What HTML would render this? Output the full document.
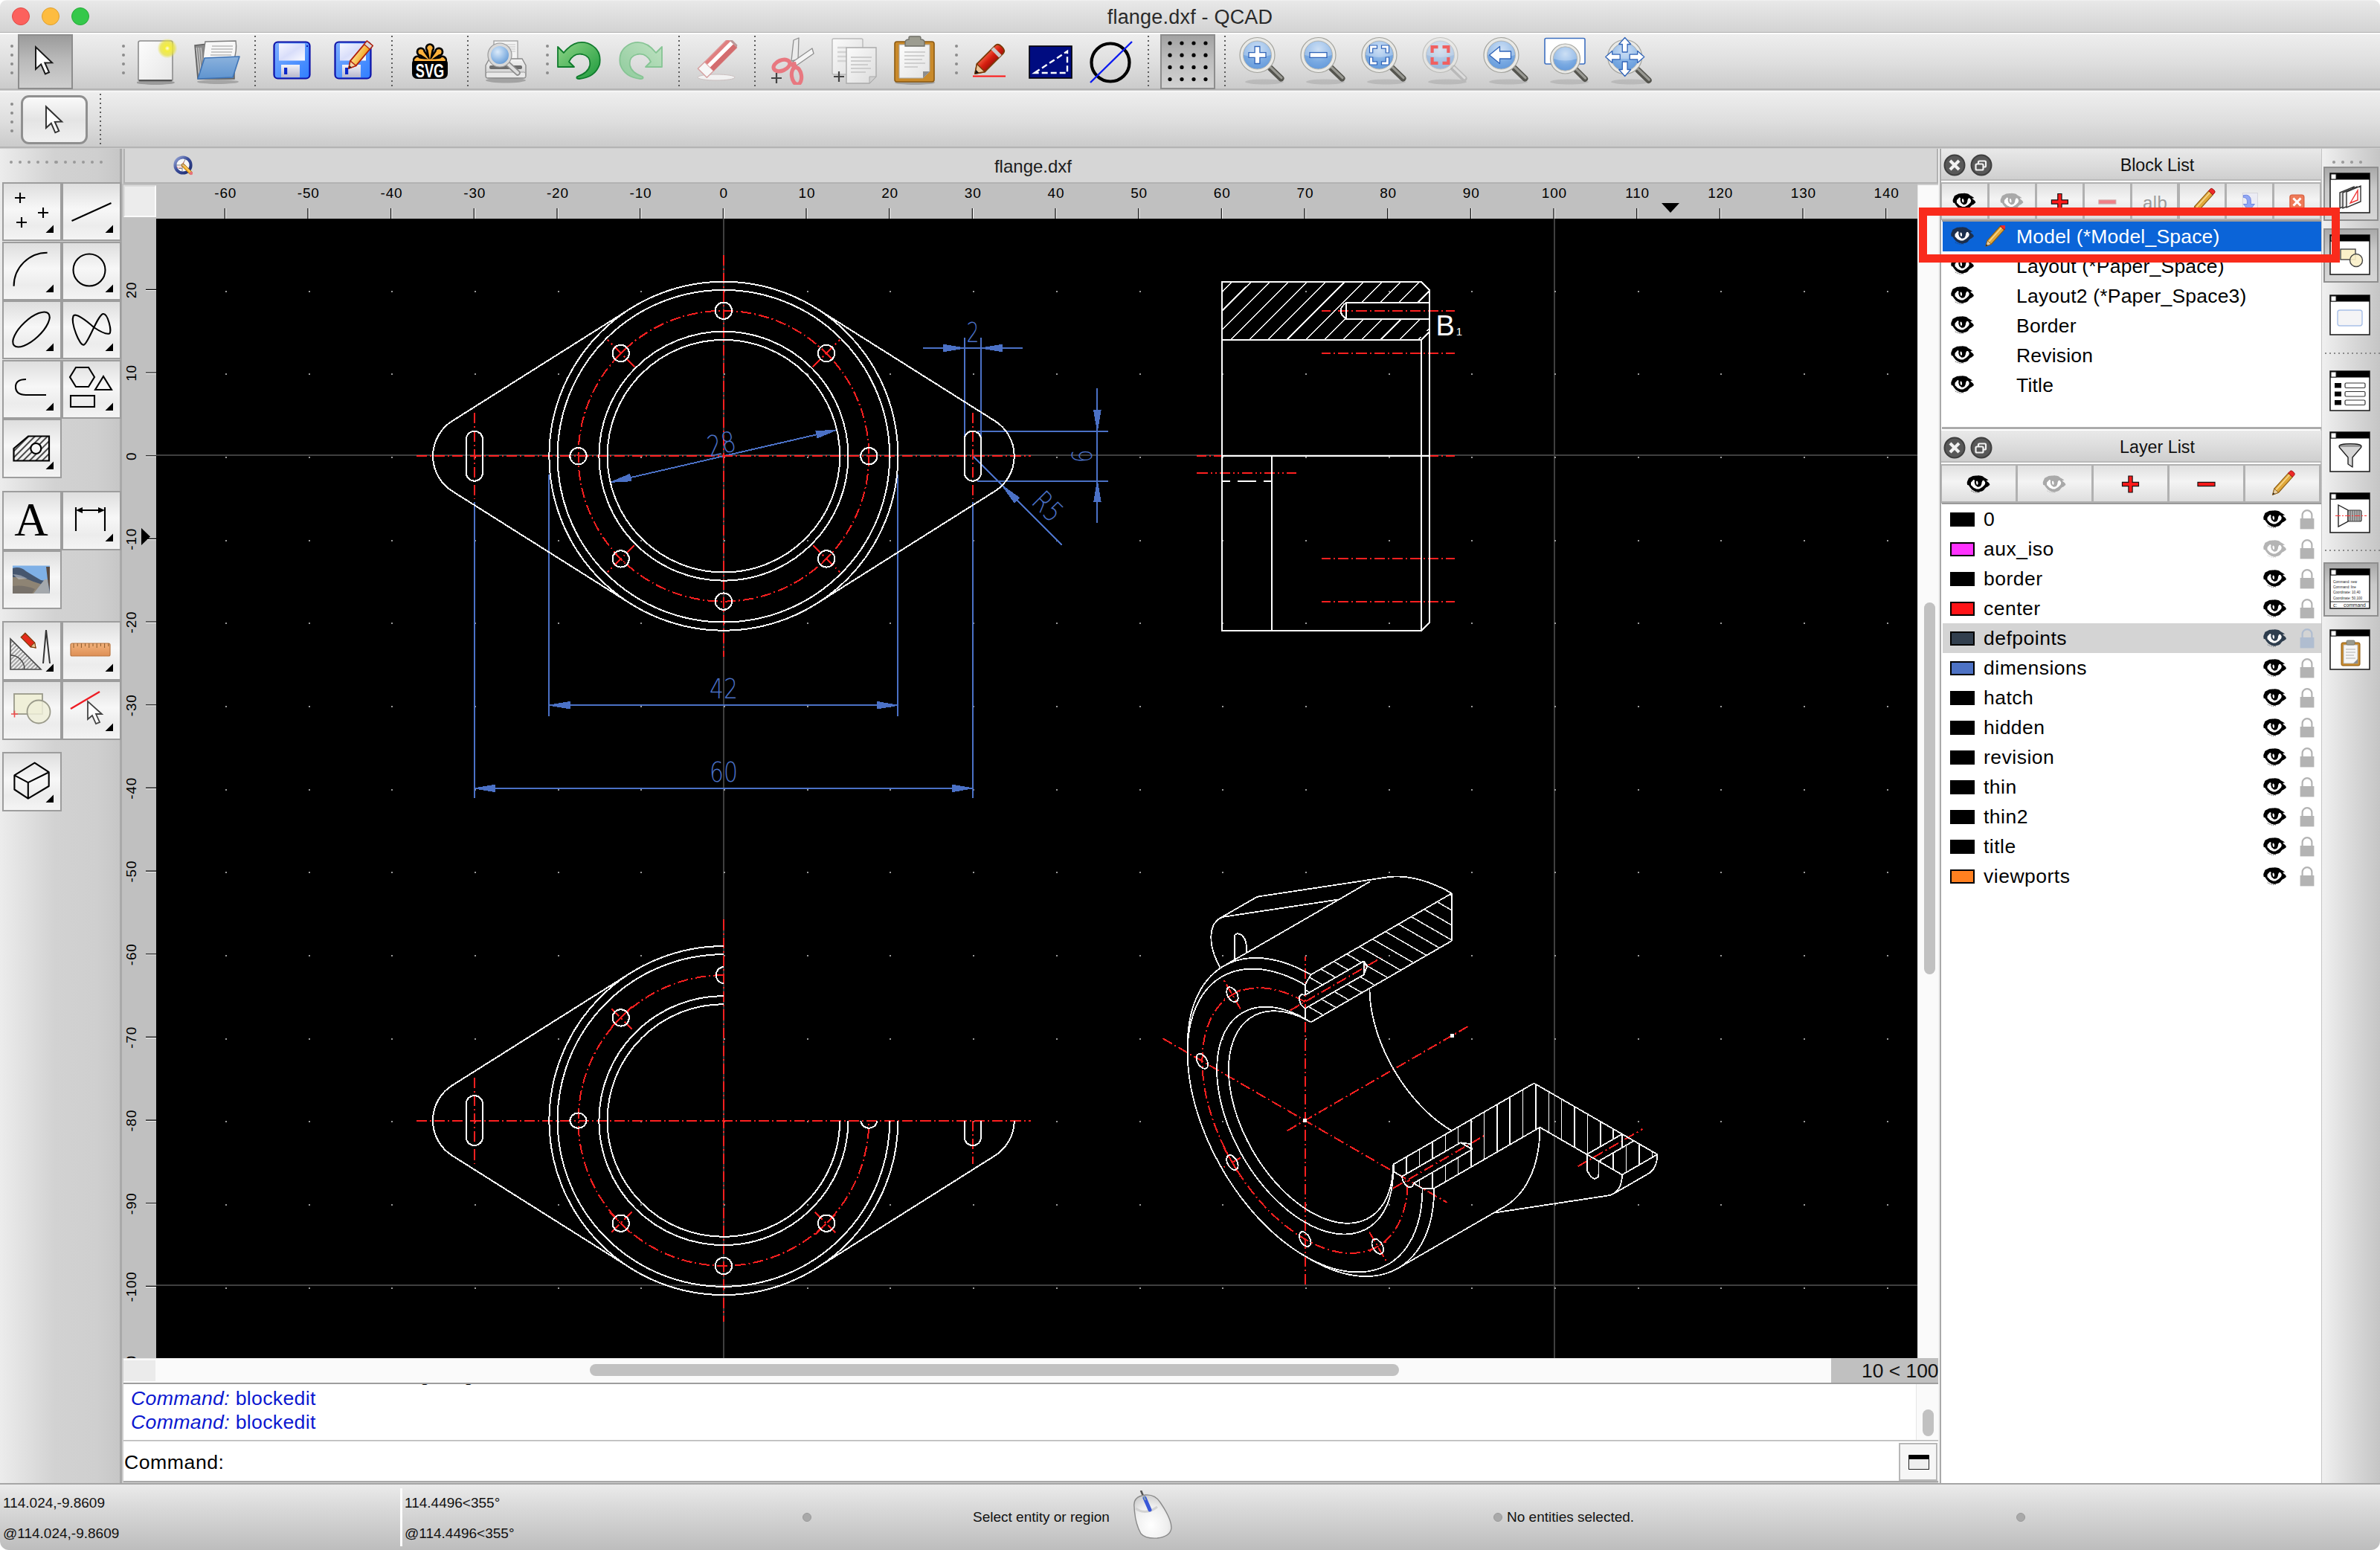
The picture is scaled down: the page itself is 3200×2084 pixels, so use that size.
<!DOCTYPE html>
<html lang="en"><head><meta charset="utf-8"><title>flange.dxf - QCAD</title>
<style>

*{box-sizing:border-box;margin:0;padding:0}
html{background:#fff}
html,body{width:3200px;height:2084px;overflow:hidden}
body{background:#fff}
body{position:relative;font-family:"Liberation Sans","DejaVu Sans",sans-serif;color:#111;font-size:26px}
.abs{position:absolute}
#titlebar{left:0;top:0;width:3200px;height:44px;background:linear-gradient(#f3f3f3,#e8e8e8 4%,#d3d3d3);border-bottom:1px solid #b0b0b0;border-radius:9px 9px 0 0}
#title{left:0;top:0;width:3200px;height:44px;line-height:46px;text-align:center;font-size:27px;color:#2a2a2a;letter-spacing:.2px}
.tl{width:24px;height:24px;border-radius:50%;top:10px}
#tb1{left:0;top:44px;width:3200px;height:77px;background:linear-gradient(#fff 0,#fff 2px,#eeeeee 2px,#dedede 55%,#cbcbcb);border-bottom:2px solid #b4b4b4}
#tb2{left:0;top:122px;width:3200px;height:77px;background:linear-gradient(#f6f6f6 0,#f6f6f6 2px,#eeeeee 2px,#dedede 55%,#cbcbcb);border-bottom:2px solid #b4b4b4}
#leftpanel{left:0;top:200px;width:163px;height:1794px;background:linear-gradient(90deg,#ececec,#d2d2d2 45%,#cfcfcf 80%,#c6c6c6)}
#leftpanel .edge{left:161px;top:0;width:3px;height:1794px;background:#a9a9a9}
#tabbar{left:166px;top:200px;width:2440px;height:47px;background:#d6d6d6;border-bottom:2px solid #b2b2b2;border-left:2px solid #b2b2b2;border-right:2px solid #b2b2b2}
#tabtitle{left:166px;top:200px;width:2440px;height:46px;line-height:47px;text-align:center;font-size:24px;color:#1c1c1c;padding-left:6px}
#hruler{left:164px;top:247px;width:2414px;height:47px;background:#c0c0c0}
#vruler{left:164px;top:294px;width:46px;height:1532px;background:#c0c0c0}
#rcorner{left:166px;top:249px;width:44px;height:43px;background:#ececec;border:2px solid #fbfbfb;border-top-color:#dcdcdc;border-left-color:#dcdcdc}
#canvas{left:210px;top:294px;width:2368px;height:1532px;background:#000;overflow:hidden}
#vscroll{left:2578px;top:249px;width:28px;height:1577px;background:#fafafa;border-left:1px solid #e6e6e6}
#vthumb{left:2586.5px;top:809.5px;width:15.5px;height:500px;border-radius:8px;background:#c1c1c1}
#hscroll{left:166px;top:1826px;width:2412px;height:33px;background:#fafafa;border-top:1px solid #e8e8e8}
#hthumb{left:793px;top:1834px;width:1088px;height:16px;border-radius:8px;background:#c1c1c1}
#hcorner{left:166px;top:1829px;width:43px;height:28px;background:#ebebeb}
#zoomlbl{left:2462px;top:1826px;width:146.5px;height:33px;background:#c0c0c0;font-size:26.4px;line-height:35px;text-align:right;padding-right:2px;color:#111}
#cmdhist{left:166px;top:1859px;width:2440px;height:78px;background:#fff;border-top:2px solid #9e9e9e;border-bottom:1px solid #bdbdbd;overflow:hidden}
#cmdline{left:166px;top:1938px;width:2440px;height:55px;background:#fff;border-bottom:2px solid #a8a8a8}
#status{left:0;top:1994px;width:3200px;height:90px;background:linear-gradient(#ebebeb,#d9d9d9 35%,#bdbdbd);border-top:2px solid #a6a6a6;border-radius:0 0 12px 12px}
.st{font-size:19px;color:#111;white-space:nowrap;line-height:22px}
#rpanel{left:2608px;top:200px;width:514px;height:1794px;background:#fff}
#rtool{left:3122px;top:200px;width:78px;height:1794px;background:linear-gradient(90deg,#f0f0f0,#dcdcdc 45%,#c5c5c5)}
.dockhdr{left:2610px;width:511px;height:43px;background:linear-gradient(#e9e9e9,#dadada 60%,#cfcfcf);border-bottom:2px solid #b9b9b9;font-size:23.3px;text-align:center;line-height:44px;color:#111;padding-left:70px}
.btnrow{left:2610px;width:511px;background:#b1b1b1}
.btn{position:absolute;top:2px;background:linear-gradient(#e0e0e0,#f4f4f4 45%,#dedede);}
.row{position:absolute;left:0;width:509px;height:40px;line-height:40px;font-size:26.5px;letter-spacing:.2px;white-space:nowrap;color:#000}
.lrow{letter-spacing:.5px}
.sw{position:absolute;left:10px;top:11px;width:33px;height:19px;border:2px solid #000}
.tbtn{position:absolute;background:linear-gradient(#dedede,#f7f7f7 45%,#ececec 75%,#f4f4f4);border:2.5px solid #9d9d9d}

</style></head>
<body>
<div class="abs" style="left:0;top:40px;width:3200px;height:1960px;background:#cdcdcd"></div>
<div id="titlebar" class="abs"></div>
<div id="title" class="abs">flange.dxf - QCAD</div>
<i class="abs tl" style="left:16px;background:#fc615d;border:1px solid #de4b47"></i>
<i class="abs tl" style="left:56px;background:#fdbc40;border:1px solid #dda031"></i>
<i class="abs tl" style="left:96px;background:#34c84a;border:1px solid #27a93a"></i>
<div id="tb1" class="abs"></div>
<i class="abs" style="left:13.8px;top:59.8px;width:4.4px;height:4.4px;border-radius:50%;background:#8c8c8c"></i><i class="abs" style="left:13.8px;top:71.8px;width:4.4px;height:4.4px;border-radius:50%;background:#8c8c8c"></i><i class="abs" style="left:13.8px;top:83.8px;width:4.4px;height:4.4px;border-radius:50%;background:#8c8c8c"></i><i class="abs" style="left:13.8px;top:95.8px;width:4.4px;height:4.4px;border-radius:50%;background:#8c8c8c"></i>
<div class="abs" style="left:24px;top:46px;width:74px;height:74px;background:linear-gradient(#9b9b9b,#b9b9b9 45%,#cfcfcf);border:2px solid #8d8d8d"></div>
<div class="abs" style="left:46px;top:61px;line-height:0"><svg width="27" height="41" viewBox="0 0 20 30" ><path d="M1.5 1.5 L1.5 23.5 L6.8 18.6 L11.0 28.3 L14.8 26.6 L10.6 17.2 L17.8 17.0 Z" fill="#fff" stroke="#1a1a1a" stroke-width="1.48" stroke-linejoin="miter"/></svg></div>
<i class="abs" style="left:163.8px;top:59.8px;width:4.4px;height:4.4px;border-radius:50%;background:#8c8c8c"></i><i class="abs" style="left:163.8px;top:71.8px;width:4.4px;height:4.4px;border-radius:50%;background:#8c8c8c"></i><i class="abs" style="left:163.8px;top:83.8px;width:4.4px;height:4.4px;border-radius:50%;background:#8c8c8c"></i><i class="abs" style="left:163.8px;top:95.8px;width:4.4px;height:4.4px;border-radius:50%;background:#8c8c8c"></i>
<div class="abs" style="left:184px;top:52px;line-height:0"><svg width="60" height="64" viewBox="0 0 60 64" ><defs><radialGradient id="g1"><stop offset="0" stop-color="#fffdf0"/><stop offset=".25" stop-color="#f4ee3c"/><stop offset=".7" stop-color="#e8e23a" stop-opacity=".75"/><stop offset="1" stop-color="#e6e040" stop-opacity="0"/></radialGradient>
<linearGradient id="g1p" x1="0" y1="0" x2="1" y2="1"><stop offset="0" stop-color="#fdfdfd"/><stop offset="1" stop-color="#e6e6e6"/></linearGradient></defs>
<ellipse cx="25" cy="59" rx="26" ry="3" fill="#000" opacity=".25"/>
<rect x="2" y="3" width="46" height="54" rx="2.5" fill="url(#g1p)" stroke="#8c8c8c" stroke-width="1.6"/>
<rect x="3" y="55" width="44" height="2.2" fill="#555"/>
<circle cx="41" cy="13" r="13.5" fill="url(#g1)"/></svg></div>
<div class="abs" style="left:259px;top:52px;line-height:0"><svg width="68" height="64" viewBox="0 0 68 64" ><defs><linearGradient id="g2" x1="0" y1="0" x2="0" y2="1"><stop offset="0" stop-color="#8bb2dd"/><stop offset="1" stop-color="#5f94cf"/></linearGradient></defs>
<ellipse cx="34" cy="58" rx="28" ry="3" fill="#000" opacity=".2"/>
<path d="M3 9 L20 7 L24 11 L56 11 L56 54 L7 54 Z" fill="#8a8a8a" stroke="#5e5e5e" stroke-width="1.5"/>
<path d="M5 12 L9 50 M8 12 L12 50 M11 12 L15 50" stroke="#d0d0d0" stroke-width="1.2"/>
<path d="M17 4 L58 3 Q60 16 55 30 L50 52 L10 52 Q14 30 15 18 Z" fill="#f7f7f7" stroke="#7d7d7d" stroke-width="1.4"/>
<path d="M26 10 H54 M25 14 H54 M25 18 H53 M24 22 H52 M24 26 H50" stroke="#b9b9b9" stroke-width="1.6"/>
<path d="M16 26 L63 24 L54 52 L7 54 Z" fill="url(#g2)" stroke="#3f74b6" stroke-width="1.6" stroke-linejoin="round"/></svg></div>
<i class="abs" style="left:342px;top:48px;width:2px;height:70px;background:repeating-linear-gradient(180deg,#5c5c5c 0,#5c5c5c 2px,transparent 2px,transparent 6px)"></i>
<div class="abs" style="left:367px;top:55px;line-height:0"><svg width="52" height="54" viewBox="0 0 52 54" ><defs><linearGradient id="g3" x1="0" y1="0" x2="1" y2="1"><stop offset="0" stop-color="#7fb0ff"/><stop offset="1" stop-color="#2f7dff"/></linearGradient>
<linearGradient id="g3w" x1="0" y1="0" x2="1" y2="1"><stop offset="0" stop-color="#f6f7ff"/><stop offset=".5" stop-color="#d9defa"/><stop offset="1" stop-color="#fbfbff"/></linearGradient>
<linearGradient id="g3s" x1="0" y1="0" x2="0" y2="1"><stop offset="0" stop-color="#f2f2f8"/><stop offset="1" stop-color="#b7b7cc"/></linearGradient>
<linearGradient id="g3y" x1="0" y1="0" x2="1" y2="1"><stop offset="0" stop-color="#ffe89a"/><stop offset="1" stop-color="#f09a10"/></linearGradient></defs><rect x="1.5" y="1.5" width="48" height="49" rx="5" fill="url(#g3)" stroke="#0d12a8" stroke-width="2.2"/>
<rect x="8" y="3.5" width="35" height="23" fill="url(#g3w)"/>
<rect x="11" y="32" width="25" height="17" fill="url(#g3s)"/>
<rect x="15" y="36" width="4.2" height="9" fill="#0c28c8"/>
<rect x="45" y="6" width="2" height="2" fill="#0d12a8"/></svg></div>
<div class="abs" style="left:449px;top:51px;line-height:0"><svg width="60" height="60" viewBox="0 0 60 60" ><defs><linearGradient id="g4" x1="0" y1="0" x2="1" y2="1"><stop offset="0" stop-color="#7fb0ff"/><stop offset="1" stop-color="#2f7dff"/></linearGradient>
<linearGradient id="g4w" x1="0" y1="0" x2="1" y2="1"><stop offset="0" stop-color="#f6f7ff"/><stop offset=".5" stop-color="#d9defa"/><stop offset="1" stop-color="#fbfbff"/></linearGradient>
<linearGradient id="g4s" x1="0" y1="0" x2="0" y2="1"><stop offset="0" stop-color="#f2f2f8"/><stop offset="1" stop-color="#b7b7cc"/></linearGradient>
<linearGradient id="g4y" x1="0" y1="0" x2="1" y2="1"><stop offset="0" stop-color="#ffe89a"/><stop offset="1" stop-color="#f09a10"/></linearGradient></defs><g transform="translate(0,4)"><rect x="1.5" y="1.5" width="48" height="49" rx="5" fill="url(#g4)" stroke="#0d12a8" stroke-width="2.2"/>
<rect x="8" y="3.5" width="35" height="23" fill="url(#g4w)"/>
<rect x="11" y="32" width="25" height="17" fill="url(#g4s)"/>
<rect x="15" y="36" width="4.2" height="9" fill="#0c28c8"/>
<rect x="45" y="6" width="2" height="2" fill="#0d12a8"/></g><g transform="translate(20,41) rotate(-50)"><path d="M0 0 L9 -5 L44 -5 L44 5 L9 5 Z" fill="url(#g4y)" stroke="#b0210e" stroke-width="1.8" stroke-linejoin="round"/>
<path d="M0 0 L9 -5 L9 5 Z" fill="#f3d6a8" stroke="#b0210e" stroke-width="1.4"/><path d="M0 0 L3.5 -2 L3.5 2 Z" fill="#222"/>
<rect x="38" y="-5" width="6" height="10" fill="#d7d7d7" stroke="#b0210e" stroke-width="1.2"/></g></svg></div>
<i class="abs" style="left:526px;top:48px;width:2px;height:70px;background:repeating-linear-gradient(180deg,#5c5c5c 0,#5c5c5c 2px,transparent 2px,transparent 6px)"></i>
<div class="abs" style="left:554px;top:58px;line-height:0"><svg width="48" height="48" viewBox="0 0 48 48" ><path transform="translate(24,23.4) rotate(0)" d="M0 -1 L-2.5 -14.4 A3.5 3.5 0 1 1 2.5 -14.4 Z" fill="#000" stroke="#000" stroke-width="5.6" stroke-linejoin="round"/><path transform="translate(24,23.4) rotate(-46)" d="M0 -1 L-2.5 -14.4 A3.5 3.5 0 1 1 2.5 -14.4 Z" fill="#000" stroke="#000" stroke-width="5.6" stroke-linejoin="round"/><path transform="translate(24,23.4) rotate(46)" d="M0 -1 L-2.5 -14.4 A3.5 3.5 0 1 1 2.5 -14.4 Z" fill="#000" stroke="#000" stroke-width="5.6" stroke-linejoin="round"/><path transform="translate(24,23.4) rotate(-88)" d="M0 -1 L-2.5 -14.4 A3.5 3.5 0 1 1 2.5 -14.4 Z" fill="#000" stroke="#000" stroke-width="5.6" stroke-linejoin="round"/><path transform="translate(24,23.4) rotate(88)" d="M0 -1 L-2.5 -14.4 A3.5 3.5 0 1 1 2.5 -14.4 Z" fill="#000" stroke="#000" stroke-width="5.6" stroke-linejoin="round"/><rect x="0" y="20.5" width="48" height="27.5" rx="7" fill="#000"/><path transform="translate(24,23.4) rotate(0)" d="M0 -1 L-2.5 -14.4 A3.5 3.5 0 1 1 2.5 -14.4 Z" fill="#ffb13b"/><path transform="translate(24,23.4) rotate(-46)" d="M0 -1 L-2.5 -14.4 A3.5 3.5 0 1 1 2.5 -14.4 Z" fill="#ffb13b"/><path transform="translate(24,23.4) rotate(46)" d="M0 -1 L-2.5 -14.4 A3.5 3.5 0 1 1 2.5 -14.4 Z" fill="#ffb13b"/><path transform="translate(24,23.4) rotate(-88)" d="M0 -1 L-2.5 -14.4 A3.5 3.5 0 1 1 2.5 -14.4 Z" fill="#ffb13b"/><path transform="translate(24,23.4) rotate(88)" d="M0 -1 L-2.5 -14.4 A3.5 3.5 0 1 1 2.5 -14.4 Z" fill="#ffb13b"/><path d="M3.4 21.6 H44.6 V24 H3.4 Z" fill="#ffb13b"/><rect x="1" y="24" width="46" height="3" fill="#000"/><text x="24" y="45.6" font-family="Liberation Sans, DejaVu Sans, sans-serif" font-weight="bold" font-size="26" text-anchor="middle" fill="#fff" textLength="38.5" lengthAdjust="spacingAndGlyphs">SVG</text></svg></div>
<i class="abs" style="left:628px;top:48px;width:2px;height:70px;background:repeating-linear-gradient(180deg,#5c5c5c 0,#5c5c5c 2px,transparent 2px,transparent 6px)"></i>
<div class="abs" style="left:650px;top:52px;line-height:0"><svg width="60" height="62" viewBox="0 0 60 62" ><defs><radialGradient id="g5" cx=".4" cy=".35" r=".7"><stop offset="0" stop-color="#dcebfa"/><stop offset=".6" stop-color="#8db7e4"/><stop offset="1" stop-color="#5b92cf"/></radialGradient>
<linearGradient id="g5b" x1="0" y1="0" x2="0" y2="1"><stop offset="0" stop-color="#f4f4f4"/><stop offset="1" stop-color="#c9c9c9"/></linearGradient></defs>
<ellipse cx="30" cy="56" rx="27" ry="3.5" fill="#000" opacity=".22"/>
<rect x="14" y="3" width="32" height="26" fill="#f3f3f3" stroke="#9f9f9f" stroke-width="1.3"/>
<path d="M30 8 H43 M30 11 H43 M30 14 H43 M30 17 H43" stroke="#c4c4c4" stroke-width="1.2"/>
<path d="M8 27 H52 L57 36 V50 Q57 53 54 53 H6 Q3 53 3 50 V36 Z" fill="url(#g5b)" stroke="#8b8b8b" stroke-width="1.4"/>
<rect x="8" y="36" width="44" height="5" rx="2" fill="#6d6d6d"/><rect x="3.5" y="45" width="53" height="7.5" rx="2" fill="#e9e9e9" stroke="#9a9a9a" stroke-width="1"/>
<path d="M33 34 L46 46" stroke="#8c8c8c" stroke-width="7.5" stroke-linecap="round"/><path d="M33 34 L46 46" stroke="#dedede" stroke-width="4" stroke-linecap="round"/>
<circle cx="22" cy="22" r="14" fill="url(#g5)" stroke="#d9d9d9" stroke-width="4"/><circle cx="22" cy="22" r="16" fill="none" stroke="#9a9a9a" stroke-width="1.2"/></svg></div>
<i class="abs" style="left:733.8px;top:59.8px;width:4.4px;height:4.4px;border-radius:50%;background:#8c8c8c"></i><i class="abs" style="left:733.8px;top:71.8px;width:4.4px;height:4.4px;border-radius:50%;background:#8c8c8c"></i><i class="abs" style="left:733.8px;top:83.8px;width:4.4px;height:4.4px;border-radius:50%;background:#8c8c8c"></i><i class="abs" style="left:733.8px;top:95.8px;width:4.4px;height:4.4px;border-radius:50%;background:#8c8c8c"></i>
<div class="abs" style="left:748px;top:54px;line-height:0"><svg width="62" height="56" viewBox="0 0 62 56" ><defs><linearGradient id="g6" x1="0" y1="0" x2="1" y2="1"><stop offset="0" stop-color="#8fd587"/><stop offset="1" stop-color="#1d9a3c"/></linearGradient></defs>
<path d="M2 9 L2 36 L24 36 L17 29 Q23 17 35 19 Q47 22 45 34 Q43 44 28 49 Q26 52 31 52 Q52 50 58 33 Q62 12 42 4 Q24 -1 10 17 Z" fill="url(#g6)" stroke="#0f7a2c" stroke-width="1.8" stroke-linejoin="round"/></svg></div>
<div class="abs" style="left:830px;top:54px;line-height:0"><svg width="62" height="56" viewBox="0 0 62 56" ><g transform="translate(62,0) scale(-1,1)"><defs><linearGradient id="g7" x1="0" y1="0" x2="1" y2="1"><stop offset="0" stop-color="#bfe2c2"/><stop offset="1" stop-color="#8fcb9c"/></linearGradient></defs>
<path d="M2 9 L2 36 L24 36 L17 29 Q23 17 35 19 Q47 22 45 34 Q43 44 28 49 Q26 52 31 52 Q52 50 58 33 Q62 12 42 4 Q24 -1 10 17 Z" fill="url(#g7)" stroke="#86c494" stroke-width="1.8" stroke-linejoin="round"/></g></svg></div>
<i class="abs" style="left:912px;top:48px;width:2px;height:70px;background:repeating-linear-gradient(180deg,#5c5c5c 0,#5c5c5c 2px,transparent 2px,transparent 6px)"></i>
<div class="abs" style="left:936px;top:54px;line-height:0"><svg width="58" height="58" viewBox="0 0 58 58" ><ellipse cx="27" cy="50" rx="25" ry="4" fill="#fff" opacity=".7" stroke="#c8b8b8" stroke-width="1"/>
<g transform="translate(8,44) rotate(-45)"><rect x="0" y="-8" width="13" height="17" fill="#f7f7f7" stroke="#d6a0a0" stroke-width="1.4"/>
<rect x="13" y="-8" width="44" height="17" fill="#e07f80" stroke="#d99" stroke-width="1.2"/><rect x="13" y="-3" width="44" height="5.5" fill="#fff"/>
<rect x="13" y="2.5" width="44" height="6.5" fill="#d36c6e"/><path d="M57 -8 L60 -5 L60 7 L57 9 Z" fill="#b99"/></g></svg></div>
<i class="abs" style="left:1014px;top:48px;width:2px;height:70px;background:repeating-linear-gradient(180deg,#5c5c5c 0,#5c5c5c 2px,transparent 2px,transparent 6px)"></i>
<div class="abs" style="left:1034px;top:50px;line-height:0"><svg width="62" height="64" viewBox="0 0 62 64" ><path d="M30 32 L33 4 L40 1 L39 30 Z" fill="#ececec" stroke="#8f8f8f" stroke-width="1.3" stroke-linejoin="round"/>
<path d="M32 33 L58 15 L60 22 L37 38 Z" fill="#f4f4f4" stroke="#8f8f8f" stroke-width="1.3" stroke-linejoin="round"/>
<ellipse cx="17" cy="38" rx="11.5" ry="7" transform="rotate(-22 17 38)" fill="none" stroke="#e87880" stroke-width="5.2"/>
<ellipse cx="37" cy="52" rx="6.5" ry="11.5" transform="rotate(-8 37 52)" fill="none" stroke="#e87880" stroke-width="5.2"/>
<path d="M26 34 L36 33 L38 42 L31 41 Z" fill="#e87880"/>
<path d="M3 55 H17 M10 48 V62" stroke="#444" stroke-width="2.2"/></svg></div>
<div class="abs" style="left:1114px;top:50px;line-height:0"><svg width="68" height="66" viewBox="0 0 68 66" ><defs><linearGradient id="g8" x1="0" y1="0" x2="1" y2="1"><stop offset="0" stop-color="#fbfbfb"/><stop offset="1" stop-color="#dcdcdc"/></linearGradient></defs>
<rect x="5" y="2" width="41" height="48" rx="2" fill="url(#g8)" stroke="#b9b9b9" stroke-width="1.4"/>
<path d="M12 14 H24 M12 20 H24 M12 26 H24 M12 32 H24" stroke="#d4d4d4" stroke-width="2.4"/>
<path d="M24 14 H64 V53 L55 62 H24 Z" fill="url(#g8)" stroke="#ababab" stroke-width="1.4"/>
<path d="M64 53 L55 62 L55 53 Z" fill="#cfcfcf" stroke="#ababab" stroke-width="1"/>
<path d="M30 27 H58 M30 32 H57 M30 37 H53 M30 42 H57 M30 47 H50" stroke="#cdcdcd" stroke-width="2.2"/>
<path d="M7 53 H21 M14 46 V60" stroke="#444" stroke-width="2.2"/></svg></div>
<div class="abs" style="left:1200px;top:48px;line-height:0"><svg width="60" height="68" viewBox="0 0 60 68" ><defs><linearGradient id="g9" x1="0" y1="0" x2="1" y2="1"><stop offset="0" stop-color="#fdfdfd"/><stop offset="1" stop-color="#e2e2e2"/></linearGradient></defs>
<ellipse cx="30" cy="63" rx="27" ry="3" fill="#000" opacity=".22"/>
<rect x="3" y="8" width="53" height="54" rx="3" fill="#c98a2b" stroke="#8c5a12" stroke-width="1.6"/>
<path d="M9 12 H50 V48 L41 57 H9 Z" fill="url(#g9)" stroke="#a9a9a9" stroke-width="1"/>
<path d="M50 48 L41 57 L41 48 Z" fill="#8d8d8d"/>
<path d="M16 22 H44 M16 27 H43 M16 32 H40 M16 37 H44 M16 42 H34" stroke="#cfcfcf" stroke-width="2.2"/>
<path d="M17 9 Q17 5 22 5 L22 2.5 Q22 1 24 1 H36 Q38 1 38 2.5 L38 5 Q43 5 43 9 V14 H17 Z" fill="#9c9c90" stroke="#6e6e66" stroke-width="1.3"/></svg></div>
<i class="abs" style="left:1283.8px;top:59.8px;width:4.4px;height:4.4px;border-radius:50%;background:#8c8c8c"></i><i class="abs" style="left:1283.8px;top:71.8px;width:4.4px;height:4.4px;border-radius:50%;background:#8c8c8c"></i><i class="abs" style="left:1283.8px;top:83.8px;width:4.4px;height:4.4px;border-radius:50%;background:#8c8c8c"></i><i class="abs" style="left:1283.8px;top:95.8px;width:4.4px;height:4.4px;border-radius:50%;background:#8c8c8c"></i>
<div class="abs" style="left:1306px;top:56px;line-height:0"><svg width="50" height="52" viewBox="0 0 50 52" ><defs><linearGradient id="g10" x1="0" y1="0" x2="0" y2="1"><stop offset="0" stop-color="#f0553a"/><stop offset=".5" stop-color="#d61f10"/><stop offset="1" stop-color="#a5120a"/></linearGradient></defs>
<g transform="translate(5,43) rotate(-45)"><path d="M0 0 L11 -7.5 L46 -7.5 Q51 -7.5 51 0 Q51 7.5 46 7.5 L11 7.5 Z" fill="url(#g10)" stroke="#7a3a08" stroke-width="1.8" stroke-linejoin="round"/>
<path d="M0 0 L11 -7.5 L11 7.5 Z" fill="#e8c79c" stroke="#7a3a08" stroke-width="1.4"/><path d="M0 0 L4.5 -3 L4.5 3 Z" fill="#111"/>
<rect x="38" y="-7.5" width="5" height="15" fill="#c9c9c9"/></g>
<path d="M2 46.5 H46" stroke="#ff1414" stroke-width="2.2"/></svg></div>
<div class="abs" style="left:1383px;top:61px;line-height:0"><svg width="60" height="46" viewBox="0 0 60 46" ><rect x="1" y="1" width="57" height="43" fill="#000c80" stroke="#000" stroke-width="1.6"/>
<path d="M8 37 L52 8 L52 37 Z" fill="none" stroke="#fff" stroke-width="2.4" stroke-dasharray="8 4"/></svg></div>
<div class="abs" style="left:1463px;top:50px;line-height:0"><svg width="62" height="64" viewBox="0 0 62 64" ><circle cx="30" cy="34" r="25.5" fill="none" stroke="#000" stroke-width="4.2"/>
<path d="M3 61 L59 6" stroke="#0a18f0" stroke-width="2.4"/></svg></div>
<i class="abs" style="left:1543px;top:48px;width:2px;height:70px;background:repeating-linear-gradient(180deg,#5c5c5c 0,#5c5c5c 2px,transparent 2px,transparent 6px)"></i>
<div class="abs" style="left:1560px;top:46px;width:74px;height:74px;background:linear-gradient(#a2a2a2,#bdbdbd 45%,#d2d2d2);border:2px solid #8d8d8d"></div>
<div class="abs" style="left:1566px;top:52px;line-height:0"><svg width="62" height="62" viewBox="0 0 62 62" ><circle cx="7" cy="6.0" r="2.6" fill="#000"/><circle cx="7" cy="22.2" r="2.6" fill="#000"/><circle cx="7" cy="38.4" r="2.6" fill="#000"/><circle cx="7" cy="54.599999999999994" r="2.6" fill="#000"/><circle cx="23" cy="6.0" r="2.6" fill="#000"/><circle cx="23" cy="22.2" r="2.6" fill="#000"/><circle cx="23" cy="38.4" r="2.6" fill="#000"/><circle cx="23" cy="54.599999999999994" r="2.6" fill="#000"/><circle cx="39" cy="6.0" r="2.6" fill="#000"/><circle cx="39" cy="22.2" r="2.6" fill="#000"/><circle cx="39" cy="38.4" r="2.6" fill="#000"/><circle cx="39" cy="54.599999999999994" r="2.6" fill="#000"/><circle cx="55" cy="6.0" r="2.6" fill="#000"/><circle cx="55" cy="22.2" r="2.6" fill="#000"/><circle cx="55" cy="38.4" r="2.6" fill="#000"/><circle cx="55" cy="54.599999999999994" r="2.6" fill="#000"/></svg></div>
<i class="abs" style="left:1646px;top:48px;width:2px;height:70px;background:repeating-linear-gradient(180deg,#5c5c5c 0,#5c5c5c 2px,transparent 2px,transparent 6px)"></i>
<div class="abs" style="left:1664px;top:48px;line-height:0"><svg width="66" height="70" viewBox="0 0 66 70" ><defs><radialGradient id="g11" cx=".5" cy=".3" r=".8"><stop offset="0" stop-color="#b9d3f1"/><stop offset=".55" stop-color="#7aaae2"/><stop offset="1" stop-color="#5e95d8"/></radialGradient></defs><ellipse cx="36" cy="62" rx="26" ry="3.5" fill="#000" opacity=".10"/><path d="M44.0 43.5 L58.5 57.5" stroke="#55554f" stroke-width="8" stroke-linecap="round"/><path d="M44.5 42.7 L59.0 56.7" stroke="#9a9a94" stroke-width="3.2" stroke-linecap="round"/><g><circle cx="26.5" cy="26" r="23.5" fill="#e9e9e6" stroke="#a3a39d" stroke-width="1.2"/><circle cx="26.5" cy="26" r="19.0" fill="url(#g11)" stroke="#b8b8b2" stroke-width="1"/><path d="M8.2 26.0 A18.3 18.3 0 0 1 44.8 26.0 Q26.5 31.9 8.2 26.0 Z" fill="#fff" opacity=".28"/></g><path d="M23.1 14.5 h6.8 v8.1 h8.1 v6.8 h-8.1 v8.1 h-6.8 v-8.1 h-8.1 v-6.8 h8.1 Z" fill="#fff" stroke="#2f63b8" stroke-width="1.3"/></svg></div>
<div class="abs" style="left:1746px;top:48px;line-height:0"><svg width="66" height="70" viewBox="0 0 66 70" ><defs><radialGradient id="g12" cx=".5" cy=".3" r=".8"><stop offset="0" stop-color="#b9d3f1"/><stop offset=".55" stop-color="#7aaae2"/><stop offset="1" stop-color="#5e95d8"/></radialGradient></defs><ellipse cx="36" cy="62" rx="26" ry="3.5" fill="#000" opacity=".10"/><path d="M44.0 43.5 L58.5 57.5" stroke="#55554f" stroke-width="8" stroke-linecap="round"/><path d="M44.5 42.7 L59.0 56.7" stroke="#9a9a94" stroke-width="3.2" stroke-linecap="round"/><g><circle cx="26.5" cy="26" r="23.5" fill="#e9e9e6" stroke="#a3a39d" stroke-width="1.2"/><circle cx="26.5" cy="26" r="19.0" fill="url(#g12)" stroke="#b8b8b2" stroke-width="1"/><path d="M8.2 26.0 A18.3 18.3 0 0 1 44.8 26.0 Q26.5 31.9 8.2 26.0 Z" fill="#fff" opacity=".28"/></g><rect x="15.0" y="22.6" width="23" height="6.8" fill="#fff" stroke="#2f63b8" stroke-width="1.3"/></svg></div>
<div class="abs" style="left:1828px;top:48px;line-height:0"><svg width="66" height="70" viewBox="0 0 66 70" ><defs><radialGradient id="g13" cx=".5" cy=".3" r=".8"><stop offset="0" stop-color="#b9d3f1"/><stop offset=".55" stop-color="#7aaae2"/><stop offset="1" stop-color="#5e95d8"/></radialGradient></defs><ellipse cx="36" cy="62" rx="26" ry="3.5" fill="#000" opacity=".10"/><path d="M44.0 43.5 L58.5 57.5" stroke="#55554f" stroke-width="8" stroke-linecap="round"/><path d="M44.5 42.7 L59.0 56.7" stroke="#9a9a94" stroke-width="3.2" stroke-linecap="round"/><g><circle cx="26.5" cy="26" r="23.5" fill="#e9e9e6" stroke="#a3a39d" stroke-width="1.2"/><circle cx="26.5" cy="26" r="19.0" fill="url(#g13)" stroke="#b8b8b2" stroke-width="1"/><path d="M8.2 26.0 A18.3 18.3 0 0 1 44.8 26.0 Q26.5 31.9 8.2 26.0 Z" fill="#fff" opacity=".28"/></g><path d="M13.5 13 h10 v4.2 h-5.8 v5.8 h-4.2 Z" fill="#fff" stroke="#2f63b8" stroke-width="1.2"/><path d="M13.5 39 h10 v-4.2 h-5.8 v-5.8 h-4.2 Z" fill="#fff" stroke="#2f63b8" stroke-width="1.2"/><path d="M39.5 13 h-10 v4.2 h5.8 v5.8 h4.2 Z" fill="#fff" stroke="#2f63b8" stroke-width="1.2"/><path d="M39.5 39 h-10 v-4.2 h5.8 v-5.8 h4.2 Z" fill="#fff" stroke="#2f63b8" stroke-width="1.2"/></svg></div>
<div class="abs" style="left:1910px;top:48px;line-height:0"><svg width="66" height="70" viewBox="0 0 66 70" ><defs><radialGradient id="g14" cx=".5" cy=".3" r=".8"><stop offset="0" stop-color="#b9d3f1"/><stop offset=".55" stop-color="#7aaae2"/><stop offset="1" stop-color="#5e95d8"/></radialGradient></defs><ellipse cx="36" cy="62" rx="26" ry="3.5" fill="#000" opacity=".10"/><path d="M44.0 43.5 L58.5 57.5" stroke="#b9b9b9" stroke-width="8" stroke-linecap="round"/><path d="M44.5 42.7 L59.0 56.7" stroke="#dcdcdc" stroke-width="3.2" stroke-linecap="round"/><g opacity=".55"><circle cx="26.5" cy="26" r="23.5" fill="#e9e9e6" stroke="#a3a39d" stroke-width="1.2"/><circle cx="26.5" cy="26" r="19.0" fill="url(#g14)" stroke="#b8b8b2" stroke-width="1"/><path d="M8.2 26.0 A18.3 18.3 0 0 1 44.8 26.0 Q26.5 31.9 8.2 26.0 Z" fill="#fff" opacity=".28"/></g><path d="M13.5 13 h10 v4.2 h-5.8 v5.8 h-4.2 Z" fill="#f06060" stroke="none" stroke-width="1.2"/><path d="M13.5 39 h10 v-4.2 h-5.8 v-5.8 h-4.2 Z" fill="#f06060" stroke="none" stroke-width="1.2"/><path d="M39.5 13 h-10 v4.2 h5.8 v5.8 h4.2 Z" fill="#f06060" stroke="none" stroke-width="1.2"/><path d="M39.5 39 h-10 v-4.2 h5.8 v-5.8 h4.2 Z" fill="#f06060" stroke="none" stroke-width="1.2"/></svg></div>
<div class="abs" style="left:1992px;top:48px;line-height:0"><svg width="66" height="70" viewBox="0 0 66 70" ><defs><radialGradient id="g15" cx=".5" cy=".3" r=".8"><stop offset="0" stop-color="#b9d3f1"/><stop offset=".55" stop-color="#7aaae2"/><stop offset="1" stop-color="#5e95d8"/></radialGradient></defs><ellipse cx="36" cy="62" rx="26" ry="3.5" fill="#000" opacity=".10"/><path d="M44.0 43.5 L58.5 57.5" stroke="#55554f" stroke-width="8" stroke-linecap="round"/><path d="M44.5 42.7 L59.0 56.7" stroke="#9a9a94" stroke-width="3.2" stroke-linecap="round"/><g><circle cx="26.5" cy="26" r="23.5" fill="#e9e9e6" stroke="#a3a39d" stroke-width="1.2"/><circle cx="26.5" cy="26" r="19.0" fill="url(#g15)" stroke="#b8b8b2" stroke-width="1"/><path d="M8.2 26.0 A18.3 18.3 0 0 1 44.8 26.0 Q26.5 31.9 8.2 26.0 Z" fill="#fff" opacity=".28"/></g><path d="M10.5 26 l14 -11.5 v6.5 h15 v10 h-15 v6.5 Z" fill="#fff" stroke="#2f63b8" stroke-width="1.3" stroke-linejoin="round"/></svg></div>
<div class="abs" style="left:2074px;top:48px;line-height:0"><svg width="66" height="70" viewBox="0 0 66 70" ><defs><radialGradient id="g16" cx=".5" cy=".3" r=".8"><stop offset="0" stop-color="#b9d3f1"/><stop offset=".55" stop-color="#7aaae2"/><stop offset="1" stop-color="#5e95d8"/></radialGradient></defs><ellipse cx="36" cy="62" rx="26" ry="3.5" fill="#000" opacity=".10"/><rect x="3" y="3.5" width="54" height="34.5" rx="2" fill="#fff" stroke="#3d6fc0" stroke-width="1.6"/><path d="M45 46 L57 58" stroke="#55554f" stroke-width="8" stroke-linecap="round"/><path d="M45.5 45.2 L57.5 57.2" stroke="#9a9a94" stroke-width="3.2" stroke-linecap="round"/><g><circle cx="30.5" cy="31" r="20" fill="#e9e9e6" stroke="#a3a39d" stroke-width="1.2"/><circle cx="30.5" cy="31" r="16.2" fill="url(#g16)" stroke="#b8b8b2" stroke-width="1"/><path d="M14.9 31.0 A15.6 15.6 0 0 1 46.1 31.0 Q30.5 36.0 14.9 31.0 Z" fill="#fff" opacity=".28"/></g></svg></div>
<div class="abs" style="left:2156px;top:48px;line-height:0"><svg width="66" height="70" viewBox="0 0 66 70" ><defs><radialGradient id="g17" cx=".5" cy=".3" r=".8"><stop offset="0" stop-color="#b9d3f1"/><stop offset=".55" stop-color="#7aaae2"/><stop offset="1" stop-color="#5e95d8"/></radialGradient></defs><ellipse cx="36" cy="62" rx="26" ry="3.5" fill="#000" opacity=".10"/><path d="M46.2 46.0 L60.7 60.0" stroke="#55554f" stroke-width="8" stroke-linecap="round"/><path d="M46.7 45.2 L61.2 59.2" stroke="#9a9a94" stroke-width="3.2" stroke-linecap="round"/><g><circle cx="28.7" cy="28.5" r="23" fill="#e9e9e6" stroke="#a3a39d" stroke-width="1.2"/><circle cx="28.7" cy="28.5" r="18.6" fill="url(#g17)" stroke="#b8b8b2" stroke-width="1"/><path d="M10.8 28.5 A17.9 17.9 0 0 1 46.6 28.5 Q28.7 34.2 10.8 28.5 Z" fill="#fff" opacity=".28"/></g><path transform="rotate(0 28.7 28.5)" d="M54.7 28.5 l-9 -8 v4.6 h-10.5 v6.8 h10.5 v4.6 Z" fill="#fff" stroke="#2f63b8" stroke-width="1.3" stroke-linejoin="round"/><path transform="rotate(90 28.7 28.5)" d="M54.7 28.5 l-9 -8 v4.6 h-10.5 v6.8 h10.5 v4.6 Z" fill="#fff" stroke="#2f63b8" stroke-width="1.3" stroke-linejoin="round"/><path transform="rotate(180 28.7 28.5)" d="M54.7 28.5 l-9 -8 v4.6 h-10.5 v6.8 h10.5 v4.6 Z" fill="#fff" stroke="#2f63b8" stroke-width="1.3" stroke-linejoin="round"/><path transform="rotate(270 28.7 28.5)" d="M54.7 28.5 l-9 -8 v4.6 h-10.5 v6.8 h10.5 v4.6 Z" fill="#fff" stroke="#2f63b8" stroke-width="1.3" stroke-linejoin="round"/></svg></div>
<div id="tb2" class="abs"></div>
<i class="abs" style="left:13.8px;top:137.8px;width:4.4px;height:4.4px;border-radius:50%;background:#8c8c8c"></i><i class="abs" style="left:13.8px;top:149.8px;width:4.4px;height:4.4px;border-radius:50%;background:#8c8c8c"></i><i class="abs" style="left:13.8px;top:161.8px;width:4.4px;height:4.4px;border-radius:50%;background:#8c8c8c"></i><i class="abs" style="left:13.8px;top:173.8px;width:4.4px;height:4.4px;border-radius:50%;background:#8c8c8c"></i>
<div class="abs" style="left:28px;top:128px;width:90px;height:66px;border:3px solid #8f8f8f;border-radius:11px;background:linear-gradient(#fafafa,#e4e4e4 50%,#f0f0f0)"></div>
<div class="abs" style="left:60px;top:141px;line-height:0"><svg width="26" height="40" viewBox="0 0 20 30" ><path d="M1.5 1.5 L1.5 23.5 L6.8 18.6 L11.0 28.3 L14.8 26.6 L10.6 17.2 L17.8 17.0 Z" fill="#fff" stroke="#333" stroke-width="1.54" stroke-linejoin="miter"/></svg></div>
<i class="abs" style="left:134px;top:126px;width:2px;height:68px;background:repeating-linear-gradient(180deg,#5c5c5c 0,#5c5c5c 2px,transparent 2px,transparent 6px)"></i>
<div id="leftpanel" class="abs"><i class="abs edge"></i></div>
<i class="abs" style="left:12.9px;top:215.9px;width:4.2px;height:4.2px;border-radius:50%;background:#9a9a9a"></i><i class="abs" style="left:25.0px;top:215.9px;width:4.2px;height:4.2px;border-radius:50%;background:#9a9a9a"></i><i class="abs" style="left:37.1px;top:215.9px;width:4.2px;height:4.2px;border-radius:50%;background:#9a9a9a"></i><i class="abs" style="left:49.199999999999996px;top:215.9px;width:4.2px;height:4.2px;border-radius:50%;background:#9a9a9a"></i><i class="abs" style="left:61.3px;top:215.9px;width:4.2px;height:4.2px;border-radius:50%;background:#9a9a9a"></i><i class="abs" style="left:73.4px;top:215.9px;width:4.2px;height:4.2px;border-radius:50%;background:#9a9a9a"></i><i class="abs" style="left:85.5px;top:215.9px;width:4.2px;height:4.2px;border-radius:50%;background:#9a9a9a"></i><i class="abs" style="left:97.60000000000001px;top:215.9px;width:4.2px;height:4.2px;border-radius:50%;background:#9a9a9a"></i><i class="abs" style="left:109.7px;top:215.9px;width:4.2px;height:4.2px;border-radius:50%;background:#9a9a9a"></i><i class="abs" style="left:121.8px;top:215.9px;width:4.2px;height:4.2px;border-radius:50%;background:#9a9a9a"></i><i class="abs" style="left:133.9px;top:215.9px;width:4.2px;height:4.2px;border-radius:50%;background:#9a9a9a"></i>
<div class="tbtn" style="left:3px;top:244.5px;width:79.5px;height:79.5px"><svg width="74" height="74" viewBox="0 0 74 74" ><path d="M15 19 H29 M22 12 V26" fill="none" stroke="#000" stroke-width="2.1"/><path d="M46 39 H60 M53 32 V46" fill="none" stroke="#000" stroke-width="2.1"/><path d="M17 52 H31 M24 45 V59" fill="none" stroke="#000" stroke-width="2.1"/><path d="M67 55.5 V66 H56.5 Z" fill="#000"/></svg></div>
<div class="tbtn" style="left:83px;top:244.5px;width:79.5px;height:79.5px"><svg width="74" height="74" viewBox="0 0 74 74" ><path d="M11.5 50 L64.5 26" fill="none" stroke="#000" stroke-width="2.1"/><path d="M67 55.5 V66 H56.5 Z" fill="#000"/></svg></div>
<div class="tbtn" style="left:3px;top:324.5px;width:79.5px;height:79.5px"><svg width="74" height="74" viewBox="0 0 74 74" ><path d="M13.6 57.7 A45 45 0 0 1 58.6 12.7" fill="none" stroke="#000" stroke-width="2.1"/><path d="M67 55.5 V66 H56.5 Z" fill="#000"/></svg></div>
<div class="tbtn" style="left:83px;top:324.5px;width:79.5px;height:79.5px"><svg width="74" height="74" viewBox="0 0 74 74" ><circle cx="35" cy="36" r="21.5" fill="none" stroke="#000" stroke-width="2.1"/><path d="M67 55.5 V66 H56.5 Z" fill="#000"/></svg></div>
<div class="tbtn" style="left:3px;top:403.5px;width:79.5px;height:79.5px"><svg width="74" height="74" viewBox="0 0 74 74" ><ellipse cx="37" cy="37" rx="31.5" ry="13" transform="rotate(-43 37 37)" fill="none" stroke="#000" stroke-width="2.1"/><path d="M67 55.5 V66 H56.5 Z" fill="#000"/></svg></div>
<div class="tbtn" style="left:83px;top:403.5px;width:79.5px;height:79.5px"><svg width="74" height="74" viewBox="0 0 74 74" ><path d="M41 34 C30 24 16 14 13.5 19 C10 28 22 60 28 57.5 C34 55 46 18 53.5 16 C60 15 66 40 62 42.5 C58 44 50 40 41 34 Z" fill="none" stroke="#000" stroke-width="2.1" stroke-linejoin="round"/><path d="M67 55.5 V66 H56.5 Z" fill="#000"/></svg></div>
<div class="tbtn" style="left:3px;top:483.5px;width:79.5px;height:79.5px"><svg width="74" height="74" viewBox="0 0 74 74" ><path d="M30 24 Q16 24 16 34 Q16 45 30 45 H57" fill="none" stroke="#000" stroke-width="2.1"/><path d="M67 55.5 V66 H56.5 Z" fill="#000"/></svg></div>
<div class="tbtn" style="left:83px;top:483.5px;width:79.5px;height:79.5px"><svg width="74" height="74" viewBox="0 0 74 74" ><path d="M17 8 H34 L42 21 L34 34 H17 L9 21 Z" fill="none" stroke="#000" stroke-width="2.1" stroke-width="2"/><path d="M54 20 L65 38 H43 Z" fill="none" stroke="#000" stroke-width="2.1" stroke-width="2"/><rect x="10" y="46" width="32" height="15" fill="none" stroke="#000" stroke-width="2.1" stroke-width="2"/><path d="M67 55.5 V66 H56.5 Z" fill="#000"/></svg></div>
<div class="tbtn" style="left:3px;top:563.0px;width:79.5px;height:79.5px"><svg width="74" height="74" viewBox="0 0 74 74" ><defs><pattern id="h18" width="6" height="6" patternUnits="userSpaceOnUse" patternTransform="rotate(-45)"><path d="M0 3 H6" stroke="#000" stroke-width="1.4"/></pattern></defs><path d="M13.5 38 L33 21.5 H61 V54.5 H13.5 Z M50.3 38 a7 7 0 1 0 -14 0 a7 7 0 1 0 14 0 Z" fill="url(#h18)" fill-rule="evenodd" stroke="#000" stroke-width="2.2"/><path d="M67 55.5 V66 H56.5 Z" fill="#000"/></svg></div>
<div class="tbtn" style="left:3px;top:660.0px;width:79.5px;height:79.5px"><svg width="74" height="74" viewBox="0 0 74 74" ><text x="37" y="58" font-family="Liberation Serif, DejaVu Serif, serif" font-size="63" text-anchor="middle" fill="#000">A</text></svg></div>
<div class="tbtn" style="left:83px;top:660.0px;width:79.5px;height:79.5px"><svg width="74" height="74" viewBox="0 0 74 74" ><path d="M17 20 V52 M56 20 V52 M19 24 H54" fill="none" stroke="#000" stroke-width="2.1" stroke-width="2"/><path d="M17 24 l9 -4 v8 Z M56 24 l-9 -4 v8 Z" fill="#000"/><path d="M67 55.5 V66 H56.5 Z" fill="#000"/></svg></div>
<div class="tbtn" style="left:3px;top:739.5px;width:79.5px;height:79.5px"><svg width="74" height="74" viewBox="0 0 74 74" ><rect x="12" y="18.5" width="50" height="37.5" fill="#7fb0e6"/><path d="M12 22 Q22 19 30 26 Q38 31 50 38 L62 40 V56 H12 Z" fill="#46566e"/><path d="M12 34 Q26 33 40 40 L52 44 L44 56 H12 Z" fill="#8e8474"/><path d="M12 30 Q22 30 32 36 L20 37 Z" fill="#c9ccd4" opacity=".55"/><path d="M40 56 L55 37 L59 37 L62 56 Z" fill="#a4a8ac"/><path d="M57 20 L62 20 V50 L59 37 Z" fill="#5a4a40"/><path d="M12 46 Q28 44 42 50 L38 56 H12 Z" fill="#6e6a66" opacity=".7"/></svg></div>
<div class="tbtn" style="left:3px;top:835.0px;width:79.5px;height:79.5px"><svg width="74" height="74" viewBox="0 0 74 74" ><defs><pattern id="h19" width="4" height="4" patternUnits="userSpaceOnUse" patternTransform="rotate(-45)"><path d="M0 2 H4" stroke="#555" stroke-width="1"/></pattern></defs><path d="M9 63 L9 22 L50 63 Z" fill="url(#h19)" stroke="#444" stroke-width="1.6"/><path d="M9 44 a19 19 0 0 1 19 19" fill="none" stroke="#444" stroke-width="1.4"/><g transform="translate(43,34) rotate(-135)"><path d="M0 0 L6 -4 L24 -4 L24 4 L6 4 Z" fill="#e42a1a" stroke="#7a3a08" stroke-width="1.2"/><path d="M0 0 L6 -4 L6 4 Z" fill="#e8c79c" stroke="#7a3a08" stroke-width="1"/></g><path d="M57 10 L53 55 M57 10 L62 55 M57 10 V18" stroke="#333" stroke-width="2" fill="none"/><path d="M67 55.5 V66 H56.5 Z" fill="#000"/></svg></div>
<div class="tbtn" style="left:83px;top:835.0px;width:79.5px;height:79.5px"><svg width="74" height="74" viewBox="0 0 74 74" ><defs><linearGradient id="g20" x1="0" y1="0" x2="0" y2="1"><stop offset="0" stop-color="#f2b27c"/><stop offset="1" stop-color="#dd8f55"/></linearGradient></defs><rect x="10" y="28" width="53" height="17" rx="2" fill="url(#g20)" stroke="#b9753f" stroke-width="1.2"/><path d="M14.0 28 v6" stroke="#8a5a2a" stroke-width="1"/><path d="M19.2 28 v4" stroke="#8a5a2a" stroke-width="1"/><path d="M24.4 28 v6" stroke="#8a5a2a" stroke-width="1"/><path d="M29.6 28 v4" stroke="#8a5a2a" stroke-width="1"/><path d="M34.8 28 v6" stroke="#8a5a2a" stroke-width="1"/><path d="M40.0 28 v4" stroke="#8a5a2a" stroke-width="1"/><path d="M45.2 28 v6" stroke="#8a5a2a" stroke-width="1"/><path d="M50.4 28 v4" stroke="#8a5a2a" stroke-width="1"/><path d="M55.6 28 v6" stroke="#8a5a2a" stroke-width="1"/><path d="M60.8 28 v4" stroke="#8a5a2a" stroke-width="1"/><path d="M67 55.5 V66 H56.5 Z" fill="#000"/></svg></div>
<div class="tbtn" style="left:3px;top:915.0px;width:79.5px;height:79.5px"><svg width="74" height="74" viewBox="0 0 74 74" ><rect x="14" y="16" width="38" height="27" fill="#efefd8" stroke="#9a9a8a" stroke-width="1.8"/><circle cx="47" cy="40" r="15.5" fill="#efefd8" fill-opacity=".85" stroke="#9a9a8a" stroke-width="1.8"/><path d="M10 43 H19 M14.5 38.5 V47.5" stroke="#f05050" stroke-width="1.6"/></svg></div>
<div class="tbtn" style="left:83px;top:915.0px;width:79.5px;height:79.5px"><svg width="74" height="74" viewBox="0 0 74 74" ><path d="M10 36 L49 13" stroke="#ee1c24" stroke-width="2.4"/><path d="M33 26 L33 50 L39 45 L44 56 L49 54 L44 43 L52 43 Z" fill="#fff" stroke="#444" stroke-width="1.8"/><path d="M67 55.5 V66 H56.5 Z" fill="#000"/></svg></div>
<div class="tbtn" style="left:3px;top:1011.0px;width:79.5px;height:79.5px"><svg width="74" height="74" viewBox="0 0 74 74" ><path d="M14.4 29.4 L41.6 12.6 L60.7 25.2 L60.7 44 L32.8 60.7 L14.4 48.5 Z M14.4 29.4 L32.8 39.1 L60.7 25.2 M32.8 39.1 V60.7" fill="none" stroke="#000" stroke-width="2.1" stroke-linejoin="round"/><path d="M67 55.5 V66 H56.5 Z" fill="#000"/></svg></div>
<div id="tabbar" class="abs"></div><div id="tabtitle" class="abs">flange.dxf</div>
<div class="abs" style="left:232px;top:208px;line-height:0"><svg width="30" height="30" viewBox="0 0 30 30" ><defs><linearGradient id="g21" x1="0" y1="0" x2="1" y2="1"><stop offset="0" stop-color="#9aa8d6"/><stop offset=".45" stop-color="#3a4d9a"/><stop offset="1" stop-color="#1c2a6e"/></linearGradient></defs>
<circle cx="14" cy="14" r="10.6" fill="#f6f6f6" stroke="url(#g21)" stroke-width="4"/>
<path d="M5 14 H13 L17.5 5.5 M13 14 V22 M8 18.5 H13" stroke="#777" stroke-width=".9" fill="none"/><path d="M6 17 H12 L15.5 9" stroke="#e05050" stroke-width=".8" fill="none" stroke-dasharray="2 1"/>
<path d="M14 14 L24.5 24.5" stroke="#b5761a" stroke-width="4.6" stroke-linecap="round"/><path d="M14.5 14.5 L24 24" stroke="#f7b733" stroke-width="3" stroke-linecap="round"/><path d="M15 14 L23.5 22.5" stroke="#ffe08a" stroke-width="1"/>
<circle cx="25" cy="25" r="2.2" fill="#e8737a"/><path d="M12.6 12.6 L16 13.6 L13.6 16 Z" fill="#f3e2c0" stroke="#8a6a3a" stroke-width=".5"/></svg></div>
<div id="hruler" class="abs"></div><div id="vruler" class="abs"></div><div id="rcorner" class="abs"></div>
<div id="canvas" class="abs"><svg width="2368" height="1532" viewBox="210 294 2368 1532" style="position:absolute;left:0;top:0" fill="none" stroke-linecap="butt" shape-rendering="crispEdges"><path d="M972.9 294V1826M2089.6 294V1826M210 611.7H2578M210 1728.4H2578" stroke="#3f3f3f" stroke-width="2"/><path d="M303.1 391.5h2M303.1 503.1h2M303.1 614.8h2M303.1 726.5h2M303.1 838.1h2M303.1 949.8h2M303.1 1061.5h2M303.1 1173.2h2M303.1 1284.8h2M303.1 1396.5h2M303.1 1508.2h2M303.1 1619.8h2M303.1 1731.5h2M414.7 391.5h2M414.7 503.1h2M414.7 614.8h2M414.7 726.5h2M414.7 838.1h2M414.7 949.8h2M414.7 1061.5h2M414.7 1173.2h2M414.7 1284.8h2M414.7 1396.5h2M414.7 1508.2h2M414.7 1619.8h2M414.7 1731.5h2M526.4 391.5h2M526.4 503.1h2M526.4 614.8h2M526.4 726.5h2M526.4 838.1h2M526.4 949.8h2M526.4 1061.5h2M526.4 1173.2h2M526.4 1284.8h2M526.4 1396.5h2M526.4 1508.2h2M526.4 1619.8h2M526.4 1731.5h2M638.1 391.5h2M638.1 503.1h2M638.1 614.8h2M638.1 726.5h2M638.1 838.1h2M638.1 949.8h2M638.1 1061.5h2M638.1 1173.2h2M638.1 1284.8h2M638.1 1396.5h2M638.1 1508.2h2M638.1 1619.8h2M638.1 1731.5h2M749.8 391.5h2M749.8 503.1h2M749.8 614.8h2M749.8 726.5h2M749.8 838.1h2M749.8 949.8h2M749.8 1061.5h2M749.8 1173.2h2M749.8 1284.8h2M749.8 1396.5h2M749.8 1508.2h2M749.8 1619.8h2M749.8 1731.5h2M861.4 391.5h2M861.4 503.1h2M861.4 614.8h2M861.4 726.5h2M861.4 838.1h2M861.4 949.8h2M861.4 1061.5h2M861.4 1173.2h2M861.4 1284.8h2M861.4 1396.5h2M861.4 1508.2h2M861.4 1619.8h2M861.4 1731.5h2M973.1 391.5h2M973.1 503.1h2M973.1 614.8h2M973.1 726.5h2M973.1 838.1h2M973.1 949.8h2M973.1 1061.5h2M973.1 1173.2h2M973.1 1284.8h2M973.1 1396.5h2M973.1 1508.2h2M973.1 1619.8h2M973.1 1731.5h2M1084.8 391.5h2M1084.8 503.1h2M1084.8 614.8h2M1084.8 726.5h2M1084.8 838.1h2M1084.8 949.8h2M1084.8 1061.5h2M1084.8 1173.2h2M1084.8 1284.8h2M1084.8 1396.5h2M1084.8 1508.2h2M1084.8 1619.8h2M1084.8 1731.5h2M1196.4 391.5h2M1196.4 503.1h2M1196.4 614.8h2M1196.4 726.5h2M1196.4 838.1h2M1196.4 949.8h2M1196.4 1061.5h2M1196.4 1173.2h2M1196.4 1284.8h2M1196.4 1396.5h2M1196.4 1508.2h2M1196.4 1619.8h2M1196.4 1731.5h2M1308.1 391.5h2M1308.1 503.1h2M1308.1 614.8h2M1308.1 726.5h2M1308.1 838.1h2M1308.1 949.8h2M1308.1 1061.5h2M1308.1 1173.2h2M1308.1 1284.8h2M1308.1 1396.5h2M1308.1 1508.2h2M1308.1 1619.8h2M1308.1 1731.5h2M1419.8 391.5h2M1419.8 503.1h2M1419.8 614.8h2M1419.8 726.5h2M1419.8 838.1h2M1419.8 949.8h2M1419.8 1061.5h2M1419.8 1173.2h2M1419.8 1284.8h2M1419.8 1396.5h2M1419.8 1508.2h2M1419.8 1619.8h2M1419.8 1731.5h2M1531.5 391.5h2M1531.5 503.1h2M1531.5 614.8h2M1531.5 726.5h2M1531.5 838.1h2M1531.5 949.8h2M1531.5 1061.5h2M1531.5 1173.2h2M1531.5 1284.8h2M1531.5 1396.5h2M1531.5 1508.2h2M1531.5 1619.8h2M1531.5 1731.5h2M1643.1 391.5h2M1643.1 503.1h2M1643.1 614.8h2M1643.1 726.5h2M1643.1 838.1h2M1643.1 949.8h2M1643.1 1061.5h2M1643.1 1173.2h2M1643.1 1284.8h2M1643.1 1396.5h2M1643.1 1508.2h2M1643.1 1619.8h2M1643.1 1731.5h2M1754.8 391.5h2M1754.8 503.1h2M1754.8 614.8h2M1754.8 726.5h2M1754.8 838.1h2M1754.8 949.8h2M1754.8 1061.5h2M1754.8 1173.2h2M1754.8 1284.8h2M1754.8 1396.5h2M1754.8 1508.2h2M1754.8 1619.8h2M1754.8 1731.5h2M1866.5 391.5h2M1866.5 503.1h2M1866.5 614.8h2M1866.5 726.5h2M1866.5 838.1h2M1866.5 949.8h2M1866.5 1061.5h2M1866.5 1173.2h2M1866.5 1284.8h2M1866.5 1396.5h2M1866.5 1508.2h2M1866.5 1619.8h2M1866.5 1731.5h2M1978.1 391.5h2M1978.1 503.1h2M1978.1 614.8h2M1978.1 726.5h2M1978.1 838.1h2M1978.1 949.8h2M1978.1 1061.5h2M1978.1 1173.2h2M1978.1 1284.8h2M1978.1 1396.5h2M1978.1 1508.2h2M1978.1 1619.8h2M1978.1 1731.5h2M2089.8 391.5h2M2089.8 503.1h2M2089.8 614.8h2M2089.8 726.5h2M2089.8 838.1h2M2089.8 949.8h2M2089.8 1061.5h2M2089.8 1173.2h2M2089.8 1284.8h2M2089.8 1396.5h2M2089.8 1508.2h2M2089.8 1619.8h2M2089.8 1731.5h2M2201.5 391.5h2M2201.5 503.1h2M2201.5 614.8h2M2201.5 726.5h2M2201.5 838.1h2M2201.5 949.8h2M2201.5 1061.5h2M2201.5 1173.2h2M2201.5 1284.8h2M2201.5 1396.5h2M2201.5 1508.2h2M2201.5 1619.8h2M2201.5 1731.5h2M2313.1 391.5h2M2313.1 503.1h2M2313.1 614.8h2M2313.1 726.5h2M2313.1 838.1h2M2313.1 949.8h2M2313.1 1061.5h2M2313.1 1173.2h2M2313.1 1284.8h2M2313.1 1396.5h2M2313.1 1508.2h2M2313.1 1619.8h2M2313.1 1731.5h2M2424.8 391.5h2M2424.8 503.1h2M2424.8 614.8h2M2424.8 726.5h2M2424.8 838.1h2M2424.8 949.8h2M2424.8 1061.5h2M2424.8 1173.2h2M2424.8 1284.8h2M2424.8 1396.5h2M2424.8 1508.2h2M2424.8 1619.8h2M2424.8 1731.5h2M2536.5 391.5h2M2536.5 503.1h2M2536.5 614.8h2M2536.5 726.5h2M2536.5 838.1h2M2536.5 949.8h2M2536.5 1061.5h2M2536.5 1173.2h2M2536.5 1284.8h2M2536.5 1396.5h2M2536.5 1508.2h2M2536.5 1619.8h2M2536.5 1731.5h2" stroke="#9a9a9a" stroke-width="2"/><path d="M738.4 637.8L738.4 962.7M1207.4 637.8L1207.4 962.7M738.4 948.2L1207.4 948.2M637.9 674.6L637.9 1073.3M1307.9 674.6L1307.9 1073.3M637.9 1059.9L1307.9 1059.9M820.6 648.4L1125.2 578M1296.7 613.2L1296.7 453.5M1319.1 613.2L1319.1 453.5M1240.9 468L1374.9 468M1313.5 579.7L1489.9 579.7M1313.5 646.7L1489.9 646.7M1475.4 521.6L1475.4 702.5M1307.9 613.2L1427.4 732.7" stroke="#4b71c6" stroke-width="2"/><path d="M738.4 948.2L766.3 952.9L766.3 943.5ZM1207.4 948.2L1179.5 943.5L1179.5 952.9ZM637.9 1059.9L665.8 1064.6L665.8 1055.2ZM1307.9 1059.9L1280 1055.2L1280 1064.6ZM820.6 648.4L848.8 646.7L846.7 637.5ZM1125.2 578L1097 579.7L1099.1 588.9ZM1296.7 468L1268.8 463.3L1268.8 472.7ZM1319.1 468L1347 472.7L1347 463.3ZM1475.4 579.7L1480.1 551.8L1470.7 551.8ZM1475.4 646.7L1470.7 674.6L1480.1 674.6ZM1347.4 652.7L1363.8 675.7L1370.4 669.1Z" fill="#4b71c6" stroke="#4b71c6" stroke-width="1"/><g stroke="#ff2020" stroke-width="2" stroke-dasharray="14.2 4 2 4"><circle cx="972.9" cy="613.2" r="195.4"/><path d="M972.9 1311.1A195.4 195.4 0 1 0 1168.3 1506.6"/><path d="M1307.9 555.1L1307.9 671.3M637.9 555.1L637.9 671.3M559.7 613.2L1386.1 613.2M972.9 343L972.9 883.4M1092.9 493.2L1129.2 456.9M1119 482.9L1103.2 467.1M852.9 493.2L816.6 456.9M842.6 467.1L826.8 482.9M852.9 733.2L816.6 769.5M826.8 743.5L842.6 759.3M1092.9 733.2L1129.2 769.5M1103.2 759.3L1119 743.5M637.9 1448.5L637.9 1564.6M1307.9 1506.6L1307.9 1564.6M559.7 1506.6L1386.1 1506.6M972.9 1236.3L972.9 1776.8M849.7 1383.4L819.7 1353.4M849.7 1353.4L819.7 1383.4M849.7 1629.7L819.7 1659.7M819.7 1629.7L849.7 1659.7M1096.1 1629.7L1126.1 1659.7M1096.1 1659.7L1126.1 1629.7"/><path d="M1776.9 417.8L1955.6 417.8M1776.9 475.1L1955.6 475.1M1776.9 751.3L1955.6 751.3M1776.9 808.6L1955.6 808.6M1609.4 613.2L1642.9 613.2M1922.1 613.2L1955.6 613.2" stroke-dashoffset="2"/><path d="M1609.4 635.5L1743.4 635.5" stroke-dasharray="14.2 4 2 4 2 4"/><path d="M1754.6 1727.2L1754.6 1285.9M1563.5 1396.2L1945.7 1616.9M1730.9 1520.2L1975.7 1378.9M1754.6 1347.0L1744.7 1341.7L1734.8 1337.2L1727.0 1334.3L1717.3 1331.4L1707.9 1329.4L1698.7 1328.4L1691.5 1328.2L1682.8 1328.8L1674.5 1330.3L1666.7 1332.7L1660.7 1335.3L1653.7 1339.3L1647.1 1344.2L1641.2 1349.9L1636.8 1355.1L1632.0 1362.2L1627.7 1370.1L1624.1 1378.7L1621.7 1386.1L1619.3 1395.8L1617.6 1406.2L1616.7 1417.0L1616.4 1426.0L1616.7 1437.6L1617.7 1449.6L1619.5 1461.9L1621.3 1471.9L1624.3 1484.6L1628.0 1497.3L1632.3 1510.1L1636.2 1520.4L1641.6 1533.1L1647.6 1545.7L1654.1 1558.1L1659.7 1567.8L1667.2 1579.7L1675.1 1591.2L1683.4 1602.2L1690.3 1610.7L1699.3 1620.8L1708.5 1630.4L1718.0 1639.3L1725.7 1645.9L1735.5 1653.5L1745.3 1660.4L1755.3 1666.5L1763.2 1670.8L1773.1 1675.4L1782.8 1679.1L1792.5 1681.9L1800.1 1683.5L1809.3 1684.7L1818.3 1684.9L1826.9 1684.3L1833.5 1683.1L1841.5 1680.8L1849.0 1677.6L1856.0 1673.5L1861.2 1669.6L1867.2 1664.0L1872.7 1657.6L1877.5 1650.4L1881.0 1644.1L1884.6 1635.6L1887.7 1626.4L1890.0 1616.6L1891.4 1608.4L1892.4 1597.6L1892.8 1586.3M1734.8 1358.4L1857.2 1287.7M1873.0 1597.7L1995.4 1527.1M2121.8 1568.1L2208.6 1518.0M1668.0 1356.7L1645.7 1318.0M1668.0 1330.9L1645.7 1343.8M1668.0 1556.5L1645.7 1569.4M1645.7 1543.6L1668.0 1582.3M1841.1 1656.5L1863.5 1695.1M1841.1 1682.2L1863.5 1669.4"/></g><g stroke="#ffffff" stroke-width="2"><circle cx="972.9" cy="613.2" r="234.5"/><circle cx="972.9" cy="613.2" r="223.3"/><circle cx="972.9" cy="613.2" r="167.5"/><circle cx="972.9" cy="613.2" r="156.3"/><circle cx="1168.3" cy="613.2" r="11.2"/><circle cx="1111.1" cy="475" r="11.2"/><circle cx="972.9" cy="417.8" r="11.2"/><circle cx="834.7" cy="475" r="11.2"/><circle cx="777.5" cy="613.2" r="11.2"/><circle cx="834.7" cy="751.4" r="11.2"/><circle cx="972.9" cy="808.6" r="11.2"/><circle cx="1111.1" cy="751.4" r="11.2"/><path d="M1098 414.8L1337.7 566M1098 811.6L1337.7 660.4M1337.7 660.4A55.8 55.8 0 0 0 1337.7 566M1296.7 590.9A11.2 11.2 0 0 1 1319.1 590.9L1319.1 635.5A11.2 11.2 0 0 1 1296.7 635.5ZM847.8 414.8L608.1 566M847.8 811.6L608.1 660.4M608.1 566A55.8 55.8 0 0 0 608.1 660.4M626.7 590.9A11.2 11.2 0 0 1 649.1 590.9L649.1 635.5A11.2 11.2 0 0 1 626.7 635.5ZM972.9 1272.1A234.5 234.5 0 1 0 1207.4 1506.6M972.9 1283.2A223.3 223.3 0 1 0 1196.2 1506.6M972.9 1339.1A167.5 167.5 0 1 0 1140.4 1506.6M972.9 1350.2A156.3 156.3 0 1 0 1129.2 1506.6M847.8 1308.2L608.1 1459.3M847.8 1704.9L608.1 1553.8M608.1 1459.3A55.8 55.8 0 0 0 608.1 1553.8M626.7 1484.2A11.2 11.2 0 0 1 649.1 1484.2L649.1 1528.9A11.2 11.2 0 0 1 626.7 1528.9ZM1098 1704.9L1337.7 1553.8M1337.7 1553.8A55.8 55.8 0 0 0 1363.7 1506.6M1296.7 1506.6L1296.7 1528.9M1319.1 1506.6L1319.1 1528.9M1296.7 1528.9A11.2 11.2 0 0 0 1319.1 1528.9M1157.2 1506.6A11.2 11.2 0 0 0 1179.5 1506.6M972.9 1300A11.2 11.2 0 0 0 972.9 1322.3M845.9 1368.4A11.2 11.2 0 0 0 823.5 1368.4M823.5 1368.4A11.2 11.2 0 0 0 845.9 1368.4M788.6 1506.6A11.2 11.2 0 0 0 766.3 1506.6M766.3 1506.6A11.2 11.2 0 0 0 788.6 1506.6M845.9 1644.7A11.2 11.2 0 0 0 823.5 1644.7M823.5 1644.7A11.2 11.2 0 0 0 845.9 1644.7M984.1 1702A11.2 11.2 0 0 0 961.7 1702M961.7 1702A11.2 11.2 0 0 0 984.1 1702M1122.3 1644.7A11.2 11.2 0 0 0 1099.9 1644.7M1099.9 1644.7A11.2 11.2 0 0 0 1122.3 1644.7"/><path d="M1642.9 378.7L1910.9 378.7L1922.1 389.9L1922.1 836.5L1910.9 847.7L1642.9 847.7ZM1642.9 456.9L1910.9 456.9M1910.9 456.9L1910.9 847.7M1642.9 613.2L1922.1 613.2M1709.9 613.2L1709.9 847.7M1922.1 406.6L1810.4 406.6L1810.4 428.9L1922.1 428.9M1810.4 406.6Q1794.8 417.8 1810.4 428.9M1910.9 456.9L1922.1 445.7"/><path d="M1642.9 646.7L1709.9 646.7" stroke-dasharray="25 10" stroke-dashoffset="13.5"/><path d="M1754.6 1324.2L1748.6 1320.9L1742.7 1317.9L1736.8 1315.1L1730.9 1312.6L1725.0 1310.3L1719.2 1308.4L1713.4 1306.7L1707.7 1305.4L1702.0 1304.3L1696.5 1303.4L1691.0 1302.9L1685.6 1302.7L1680.3 1302.8L1675.1 1303.1L1670.0 1303.7L1665.0 1304.7L1660.2 1305.9L1655.5 1307.4L1650.9 1309.2L1646.5 1311.2L1640.8 1314.4L1636.8 1317.1L1632.9 1320.1L1629.2 1323.3L1625.7 1326.8L1622.3 1330.6L1619.2 1334.6L1616.2 1338.8L1613.4 1343.3L1610.9 1348.0L1608.5 1353.0L1606.3 1358.1L1604.4 1363.5L1602.7 1369.1L1601.1 1374.8L1599.8 1380.8L1598.8 1386.9L1597.9 1393.2L1597.3 1399.7L1596.9 1406.3L1596.7 1413.1L1596.7 1420.0L1597.0 1427.0L1597.5 1434.1L1598.2 1441.4L1599.1 1448.7L1600.3 1456.1L1601.6 1463.6L1603.2 1471.1L1605.0 1478.7L1607.0 1486.4L1609.3 1494.0L1611.7 1501.7L1614.3 1509.4L1617.2 1517.1L1620.2 1524.7L1623.4 1532.4L1626.8 1540.0L1630.4 1547.5L1634.2 1555.0L1638.1 1562.5L1643.6 1572.2L1647.9 1579.5L1652.4 1586.6L1657.0 1593.6L1661.8 1600.5L1666.6 1607.2L1671.7 1613.9L1676.8 1620.3L1682.0 1626.6L1687.3 1632.7L1692.8 1638.7L1698.3 1644.4L1703.9 1650.0L1709.6 1655.4L1715.3 1660.5L1721.1 1665.4L1726.9 1670.1L1732.8 1674.6L1738.7 1678.8L1744.7 1682.8L1750.6 1686.6L1756.6 1690.0L1762.5 1693.3L1768.5 1696.2L1774.4 1698.9L1780.3 1701.3L1786.1 1703.5L1791.9 1705.3L1797.7 1706.9L1803.4 1708.2L1809.0 1709.2L1814.6 1709.9L1820.0 1710.3L1825.4 1710.4L1830.7 1710.3L1835.8 1709.8L1840.9 1709.1L1845.8 1708.1L1850.6 1706.8L1855.3 1705.2L1859.8 1703.3L1864.1 1701.2L1869.7 1697.9L1873.7 1695.1L1877.5 1692.0L1881.2 1688.7L1884.6 1685.1L1887.9 1681.3L1891.0 1677.2L1893.9 1672.8L1896.6 1668.3L1899.1 1663.5L1901.4 1658.5L1903.5 1653.2L1905.4 1647.8L1907.0 1642.1L1908.5 1636.3L1909.7 1630.3L1910.7 1624.1L1911.5 1617.7L1912.1 1611.2L1912.4 1604.5L1912.5 1597.7M1762.5 1310.5L1756.5 1307.2L1750.6 1304.2L1744.7 1301.3L1738.8 1298.8L1732.9 1296.5L1727.1 1294.5L1721.3 1292.7L1715.5 1291.3L1709.9 1290.0L1704.3 1289.1L1698.7 1288.4L1691.5 1288.0L1686.1 1287.9L1680.9 1288.2L1675.8 1288.7L1670.8 1289.5L1665.9 1290.6L1661.1 1291.9L1656.5 1293.6L1652.0 1295.5L1647.6 1297.6L1643.4 1300.0L1639.3 1302.7L1635.4 1305.6L1631.7 1308.8L1628.1 1312.2L1624.7 1315.9L1621.5 1319.8L1618.4 1324.0L1615.6 1328.4L1612.9 1333.0L1610.5 1337.8L1608.2 1342.8L1605.4 1349.8L1603.6 1355.3L1602.0 1361.0L1600.6 1366.9L1599.4 1373.0L1598.5 1379.2L1597.7 1385.5L1597.1 1392.0L1596.8 1398.7L1596.7 1405.5L1596.7 1412.4L1597.0 1419.5M1751.3 1686.6L1757.2 1690.3L1763.1 1693.9L1769.1 1697.1L1775.0 1700.2L1781.0 1702.9L1786.9 1705.5L1792.7 1707.7L1798.6 1709.7L1804.3 1711.4L1810.1 1712.9L1815.7 1714.1L1823.2 1715.2L1828.7 1715.8L1834.1 1716.0L1839.4 1716.0L1844.6 1715.8L1849.7 1715.2L1854.7 1714.4L1859.6 1713.3L1864.4 1711.9L1869.0 1710.2L1873.5 1708.3L1877.9 1706.1L1882.1 1703.7L1886.1 1701.0L1890.0 1698.0L1893.7 1694.8L1897.3 1691.4L1900.6 1687.7L1903.8 1683.7L1906.9 1679.5L1909.7 1675.1L1912.3 1670.5L1915.6 1664.0L1917.7 1658.9L1919.7 1653.6L1921.5 1648.0L1923.1 1642.3L1924.5 1636.4L1925.6 1630.4L1926.6 1624.1L1927.3 1617.8L1927.9 1611.2L1928.2 1604.5L1928.3 1597.7M1754.6 1369.8L1748.6 1366.5L1742.7 1363.6L1736.8 1361.1L1730.9 1358.9L1725.1 1357.1L1719.4 1355.6L1713.7 1354.6L1708.2 1353.9L1702.8 1353.7L1697.5 1353.8L1692.3 1354.3L1687.3 1355.1L1682.5 1356.4L1677.9 1358.1L1673.5 1360.1L1669.2 1362.5L1665.2 1365.2L1661.4 1368.3L1657.8 1371.8L1654.5 1375.6L1651.5 1379.7L1648.7 1384.2L1646.1 1389.0L1643.2 1395.8L1641.3 1401.2L1639.7 1406.9L1638.4 1412.9L1637.4 1419.1L1636.7 1425.5L1636.3 1432.1L1636.1 1438.9L1636.3 1445.9L1636.8 1453.1L1637.6 1460.3L1638.7 1467.7L1640.0 1475.2L1641.7 1482.8L1643.6 1490.4L1645.9 1498.1L1648.4 1505.8L1651.1 1513.4L1654.2 1521.1L1657.5 1528.8L1661.0 1536.3L1664.8 1543.8L1668.8 1551.3L1673.0 1558.5L1677.4 1565.7L1682.0 1572.7L1686.8 1579.6L1691.8 1586.2L1696.9 1592.7L1702.2 1598.9L1707.6 1605.0L1713.1 1610.7L1718.7 1616.2L1724.5 1621.4L1730.3 1626.4L1736.1 1631.0L1742.0 1635.3L1748.0 1639.3L1753.9 1642.9L1759.9 1646.2L1765.8 1649.2L1771.7 1651.8L1777.6 1654.0L1783.4 1655.9L1789.2 1657.3L1794.8 1658.4L1802.2 1659.3L1807.6 1659.5L1812.9 1659.3L1818.0 1658.7L1822.9 1657.7L1827.7 1656.4L1832.3 1654.6L1836.7 1652.5L1840.9 1650.1L1844.8 1647.2L1848.6 1644.0L1852.1 1640.5L1855.4 1636.6L1858.4 1632.4L1861.1 1627.9L1863.6 1623.1L1865.8 1617.9L1867.7 1612.5L1869.3 1606.8L1870.6 1600.9L1871.7 1594.7L1872.4 1588.3L1872.9 1581.7L1873.0 1574.9M1762.5 1374.4L1756.5 1371.1L1750.6 1368.2L1744.7 1365.7L1738.8 1363.6L1733.0 1362.0L1727.3 1360.7L1721.7 1359.8L1716.2 1359.4L1710.9 1359.3L1705.7 1359.7L1699.0 1360.8L1694.2 1362.2L1689.6 1363.9L1685.3 1366.1L1681.1 1368.6L1677.2 1371.6L1673.5 1374.9L1670.1 1378.5L1667.0 1382.6L1664.1 1387.0L1661.5 1391.7L1659.2 1396.7L1657.3 1402.1L1655.6 1407.7L1654.2 1413.7L1653.2 1419.8L1652.4 1426.2L1652.0 1432.9L1651.9 1439.7L1652.2 1446.7L1652.7 1453.9L1653.6 1461.2L1655.3 1471.2L1656.9 1478.7L1658.8 1486.3L1661.0 1494.0L1663.5 1501.7L1666.3 1509.4L1669.4 1517.1L1672.7 1524.7L1676.4 1532.3L1680.2 1539.8L1684.3 1547.1L1688.6 1554.4L1693.2 1561.5L1697.9 1568.4L1702.9 1575.1L1708.0 1581.6L1713.2 1587.9L1718.7 1593.9L1724.2 1599.6L1729.8 1605.1L1735.6 1610.3L1743.4 1616.7L1749.3 1621.1L1755.2 1625.2L1761.2 1628.9L1767.1 1632.2L1773.1 1635.2L1779.0 1637.7L1784.9 1639.9L1790.7 1641.7L1796.4 1643.1L1802.0 1644.0L1807.5 1644.6L1812.9 1644.7L1818.1 1644.4L1823.2 1643.7L1828.1 1642.6L1832.8 1641.1L1837.3 1639.2L1841.6 1636.8L1845.6 1634.1L1849.4 1631.0L1853.0 1627.5L1857.3 1622.3L1860.3 1618.0L1862.9 1613.4L1865.2 1608.4L1867.3 1603.1L1869.0 1597.5L1870.5 1591.7L1871.6 1585.6L1872.4 1579.2L1872.9 1572.6L1873.0 1565.8M1841.5 1330.3L1841.7 1337.3L1842.2 1344.5L1843.1 1351.8L1844.3 1359.2L1845.8 1366.8L1847.6 1374.4L1850.5 1384.6L1853.0 1392.3L1855.8 1400.0L1858.9 1407.7L1862.3 1415.3L1865.9 1422.9L1869.7 1430.4L1873.8 1437.7L1878.2 1445.0L1882.7 1452.0L1887.4 1458.9L1892.4 1465.7L1897.5 1472.2L1902.8 1478.4L1908.2 1484.5L1915.6 1492.1L1921.3 1497.5L1927.0 1502.5L1932.9 1507.3L1938.8 1511.7L1944.7 1515.8L1950.7 1519.5M1787.4 1216.9L1786.0 1217.7L1784.6 1218.5L1783.2 1219.4L1781.9 1220.3M2015.5 1626.3L2019.9 1624.1L2024.2 1621.6L2028.3 1618.9L2033.5 1614.8L2037.2 1611.4L2040.8 1607.8L2044.1 1604.0L2047.3 1599.9L2050.3 1595.5L2053.1 1590.9L2055.7 1586.1L2058.8 1579.4L2060.9 1574.1L2062.9 1568.6L2064.6 1562.8L2066.0 1556.9L2067.3 1550.9L2068.4 1544.6L2069.5 1536.0L2070.0 1529.4L2070.3 1522.6L2070.4 1515.7M1646.7 1232.5L1800.5 1209.3M1646.7 1232.5L1641.8 1233.8L1637.5 1236.4L1632.9 1241.6L1630.5 1246.6L1628.9 1252.5L1628.3 1259.2L1628.6 1266.4L1629.8 1274.1L1632.9 1284.6L1636.2 1292.4L1640.3 1300.1M2008.3 1630.7L2162.6 1607.4M2162.6 1607.4L2166.8 1606.3L2171.7 1603.5L2174.7 1600.5L2177.3 1596.7L2179.1 1592.2L2180.6 1585.3L2181.0 1579.5M1863.6 1179.6L1694.1 1205.1M1694.1 1205.1L1692.4 1205.4L1690.7 1205.9L1687.6 1207.2L1686.2 1208.1L1684.9 1209.1M2214.1 1579.0L2217.9 1577.0L2222.1 1573.1L2224.6 1569.3L2226.5 1564.9L2228.0 1557.9L2228.4 1552.1M1952.0 1201.1L1945.9 1197.7L1937.8 1193.6L1931.8 1190.9L1925.7 1188.4L1919.8 1186.2L1911.8 1183.6L1906.0 1182.1L1900.2 1180.8L1892.5 1179.5L1886.9 1178.9L1881.3 1178.6L1875.9 1178.5L1868.8 1178.9L1863.6 1179.6M1884.9 1581.8L1886.5 1588.3L1890.8 1594.1L1894.7 1596.3L1899.0 1595.5L1900.7 1590.9M1754.6 1337.9L1749.7 1337.0L1746.9 1340.3L1746.9 1344.8L1749.7 1351.4L1754.6 1356.1M1664.8 1341.9L1663.9 1337.1L1661.4 1332.4L1656.6 1328.0L1652.9 1327.1L1650.2 1328.6L1649.0 1333.5L1650.2 1338.3L1652.9 1342.9L1656.6 1346.2L1660.3 1347.5L1663.9 1345.6L1664.8 1341.9M1624.3 1431.3L1623.4 1426.6L1620.9 1421.9L1616.1 1417.5L1612.5 1416.6L1609.7 1418.1L1608.5 1423.0L1609.7 1427.8L1612.5 1432.4L1616.1 1435.7L1619.8 1437.0L1623.4 1435.1L1624.3 1431.3M1664.8 1567.5L1663.9 1562.8L1661.4 1558.1L1656.6 1553.7L1652.9 1552.8L1650.2 1554.2L1649.0 1559.2L1650.2 1564.0L1652.9 1568.6L1656.6 1571.9L1660.3 1573.2L1663.9 1571.2L1664.8 1567.5M1762.5 1670.7L1761.6 1665.9L1759.1 1661.2L1754.3 1656.8L1750.6 1655.9L1747.9 1657.4L1746.7 1662.3L1747.9 1667.1L1750.6 1671.7L1754.3 1675.0L1758.0 1676.3L1761.6 1674.4L1762.5 1670.7M1860.2 1680.4L1859.3 1675.6L1856.8 1670.9L1852.0 1666.5L1848.4 1665.6L1845.6 1667.1L1844.4 1672.0L1845.6 1676.8L1848.4 1681.4L1852.0 1684.7L1855.7 1686.0L1859.3 1684.1L1860.2 1680.4M1675.6 1269.5L1674.1 1263.3L1670.2 1257.7L1663.8 1254.8L1660.5 1257.1L1659.8 1260.4L1659.8 1265.1L1659.8 1269.9L1659.8 1274.7L1659.8 1281.0L1659.8 1285.8L1659.8 1290.5M1675.6 1280.6L1675.6 1269.5M2133.6 1552.1L2133.6 1560.0L2133.6 1570.4L2134.3 1574.5L2139.1 1582.2L2143.9 1585.0L2148.7 1582.8L2149.4 1579.5L2149.4 1569.1L2149.4 1561.3M2181.0 1524.8L2181.0 1543.0M1754.6 1369.8L1754.6 1356.1M1754.6 1337.9L1754.6 1324.2M1754.6 1324.2L1762.5 1310.5M1762.5 1310.5L1952.0 1201.1M1952.0 1201.1L1952.0 1264.9M1952.0 1264.9L1762.5 1374.4M1762.5 1374.4L1754.6 1369.8M1754.6 1356.1L1833.6 1310.5M1754.6 1337.9L1833.6 1292.3M1833.6 1310.5L1838.3 1298.7M1838.3 1298.7L1833.6 1292.3M1833.6 1310.5L1833.6 1292.3M1873.0 1574.9L1884.9 1581.8M1900.7 1590.9L1912.5 1597.7M1912.5 1597.7L1928.3 1597.7M1928.3 1597.7L2070.4 1515.7M2070.4 1515.7L2181.0 1579.5M2181.0 1579.5L2228.4 1552.1M2228.4 1552.1L2062.5 1456.4M2062.5 1456.4L1873.0 1565.8M1873.0 1565.8L1873.0 1574.9M1884.9 1581.8L1963.8 1536.2M1900.7 1590.9L1979.6 1545.3M1963.8 1536.2L1976.5 1538.0M1976.5 1538.0L1979.6 1545.3M1963.8 1536.2L1979.6 1545.3M2133.6 1552.1L2181.0 1524.8M2149.4 1561.3L2196.8 1533.9M1645.2 1298.9L1787.4 1216.9M1879.7 1705.1L2021.9 1623.0M2169.4 1605.1L2216.8 1577.7M1639.8 1234.8L1687.2 1207.5M1787.4 1216.9L1841.8 1185.4" stroke-width="1.8" stroke-linejoin="round"/></g><path d="M1907 456.3L1910.4 453M1918.2 445.2L1922.1 441.3M1881.3 456.8L1908.7 429.5M1856.2 456.8L1883.6 429.4M1906.5 406.5L1922.1 390.9M1831.1 456.7L1858.4 429.3M1881.3 406.5L1908.7 379.1M1806 456.6L1833.3 429.3M1856.2 406.4L1883.6 379M1780.8 456.6L1809.9 427.5M1831.1 406.3L1858.4 379M1755.7 456.5L1833.3 378.9M1730.6 456.4L1808.2 378.8M1705.5 456.4L1783.1 378.8M1679.8 456.9L1757.9 378.7M1654.6 456.8L1732.3 379.2M1642.9 443.3L1707.1 379.1M1642.9 418.1L1682 379.1M1642.9 392.9L1656.9 379M1759.5 1353.5L1779.1 1364.8M1754.6 1330.6L1760.9 1334.2M1776.9 1343.5L1796.4 1354.7M1760.7 1314.1L1778.3 1324.2M1794.3 1333.4L1813.8 1344.7M1776.1 1302.9L1795.7 1314.2M1811.6 1323.4L1831.2 1334.7M1793.5 1292.9L1813.0 1304.1M1829.0 1313.4L1848.6 1324.7M1810.9 1282.8L1830.4 1294.1M1833.8 1296.1L1865.9 1314.6M1828.2 1272.8L1883.3 1304.6M1845.6 1262.8L1900.7 1294.6M1863.0 1252.7L1918.0 1284.5M1880.3 1242.7L1935.4 1274.5M1897.7 1232.7L1952.0 1264.0M1915.1 1222.7L1952.0 1244.0M1932.5 1212.6L1952.0 1223.9M1949.8 1202.6L1952.0 1203.8M1873.8 1575.4L1873.8 1565.4M1891.2 1577.9L1891.2 1555.3M1908.6 1595.5L1908.6 1586.6M1908.6 1567.9L1908.6 1545.3M1925.9 1597.7L1925.9 1576.3M1925.9 1557.8L1925.9 1535.3M1943.3 1588.8L1943.3 1566.3M1943.3 1547.8L1943.3 1525.3M1960.7 1578.8L1960.7 1556.3M1960.7 1537.8L1960.7 1515.2M1978.1 1568.8L1978.1 1546.2M1978.1 1544.2L1978.1 1505.2M1995.4 1558.8L1995.4 1495.2M2012.8 1548.7L2012.8 1485.1M2030.2 1538.7L2030.2 1475.1M2047.5 1528.7L2047.5 1465.1M2064.9 1518.6L2064.9 1457.8M2082.3 1522.5L2082.3 1467.8M2099.7 1532.5L2099.7 1477.8M2117.0 1542.6L2117.0 1487.9M2134.4 1551.5L2134.4 1497.9M2151.8 1562.6L2151.8 1559.9M2151.8 1541.4L2151.8 1507.9M2169.1 1572.7L2169.1 1549.9M2169.1 1531.4L2169.1 1518.0M2186.5 1576.1L2186.5 1539.8M2203.9 1566.1L2203.9 1538.0M2221.3 1556.0L2221.3 1548.0" stroke="#ffffff" stroke-width="1.5"/><rect x="1752.1" y="1504.1" width="5" height="5" fill="#fff"/><rect x="1949.5" y="1390.1" width="5" height="5" fill="#fff"/><g fill="#4b71c6" stroke="none" font-family="DejaVu Sans Light, DejaVu Sans, Liberation Sans, sans-serif" font-weight="200"><text x="972.9" y="939.3" font-size="38" text-anchor="middle" textLength="38" lengthAdjust="spacingAndGlyphs">42</text><text x="972.9" y="1050.9" font-size="38" text-anchor="middle" textLength="38" lengthAdjust="spacingAndGlyphs">60</text><text x="972.9" y="609.8" font-size="38" text-anchor="middle" textLength="38" lengthAdjust="spacingAndGlyphs" transform="rotate(-13 972.9 609.8)">28</text><text x="1307.9" y="459.7" font-size="38" text-anchor="middle" textLength="17" lengthAdjust="spacingAndGlyphs">2</text><text x="1467.6" y="613.2" font-size="38" text-anchor="middle" textLength="18" lengthAdjust="spacingAndGlyphs" transform="rotate(-90 1467.6 613.2)">6</text><text x="1399.5" y="690.3" font-size="38" text-anchor="middle" textLength="40" lengthAdjust="spacingAndGlyphs" transform="rotate(45 1399.5 690.3)">R5</text></g><text x="1930.5" y="451.3" font-family="Liberation Sans, DejaVu Sans, sans-serif" font-size="38" fill="#fff" stroke="none">B<tspan font-size="15" dx="2">1</tspan></text></svg></div>
<svg class="abs" style="left:0;top:0" width="2578" height="294" viewBox="0 0 2578 294" font-family="Liberation Sans, DejaVu Sans, sans-serif" font-size="19" letter-spacing=".8" fill="#000"><text x="303.2" y="266" text-anchor="middle">-60</text><text x="414.8" y="266" text-anchor="middle">-50</text><text x="526.5" y="266" text-anchor="middle">-40</text><text x="638.2" y="266" text-anchor="middle">-30</text><text x="749.9" y="266" text-anchor="middle">-20</text><text x="861.5" y="266" text-anchor="middle">-10</text><text x="973.2" y="266" text-anchor="middle">0</text><text x="1084.9" y="266" text-anchor="middle">10</text><text x="1196.5" y="266" text-anchor="middle">20</text><text x="1308.2" y="266" text-anchor="middle">30</text><text x="1419.9" y="266" text-anchor="middle">40</text><text x="1531.6" y="266" text-anchor="middle">50</text><text x="1643.2" y="266" text-anchor="middle">60</text><text x="1754.9" y="266" text-anchor="middle">70</text><text x="1866.6" y="266" text-anchor="middle">80</text><text x="1978.2" y="266" text-anchor="middle">90</text><text x="2089.9" y="266" text-anchor="middle">100</text><text x="2201.6" y="266" text-anchor="middle">110</text><text x="2313.2" y="266" text-anchor="middle">120</text><text x="2424.9" y="266" text-anchor="middle">130</text><text x="2536.6" y="266" text-anchor="middle">140</text><path d="M303.4 280V294M415.0 280V294M526.7 280V294M638.4 280V294M750.1 280V294M861.7 280V294M973.4 280V294M1085.1 280V294M1196.7 280V294M1308.4 280V294M1420.1 280V294M1531.8 280V294M1643.4 280V294M1755.1 280V294M1866.8 280V294M1978.4 280V294M2090.1 280V294M2201.8 280V294M2313.4 280V294M2425.1 280V294M2536.8 280V294" stroke="#fff" stroke-width="1.1"/><path d="M302.3 280V294M413.9 280V294M525.6 280V294M637.3 280V294M749.0 280V294M860.6 280V294M972.3 280V294M1084.0 280V294M1195.6 280V294M1307.3 280V294M1419.0 280V294M1530.7 280V294M1642.3 280V294M1754.0 280V294M1865.7 280V294M1977.3 280V294M2089.0 280V294M2200.7 280V294M2312.3 280V294M2424.0 280V294M2535.7 280V294" stroke="#000" stroke-width="1.1"/><path d="M2234 273 L2258 273 L2246 286 Z" fill="#000"/></svg><svg class="abs" style="left:0;top:294px" width="210" height="1532" viewBox="0 294 210 1532" font-family="Liberation Sans, DejaVu Sans, sans-serif" font-size="19" letter-spacing=".8" fill="#000"><text transform="translate(183,389.9) rotate(-90)" text-anchor="middle">20</text><text transform="translate(183,501.5) rotate(-90)" text-anchor="middle">10</text><text transform="translate(183,613.2) rotate(-90)" text-anchor="middle">0</text><text transform="translate(183,724.9) rotate(-90)" text-anchor="middle">-10</text><text transform="translate(183,836.5) rotate(-90)" text-anchor="middle">-20</text><text transform="translate(183,948.2) rotate(-90)" text-anchor="middle">-30</text><text transform="translate(183,1059.9) rotate(-90)" text-anchor="middle">-40</text><text transform="translate(183,1171.6) rotate(-90)" text-anchor="middle">-50</text><text transform="translate(183,1283.2) rotate(-90)" text-anchor="middle">-60</text><text transform="translate(183,1394.9) rotate(-90)" text-anchor="middle">-70</text><text transform="translate(183,1506.6) rotate(-90)" text-anchor="middle">-80</text><text transform="translate(183,1618.2) rotate(-90)" text-anchor="middle">-90</text><text transform="translate(183,1729.9) rotate(-90)" text-anchor="middle">-100</text><path d="M196 390.5H210M196 502.1H210M196 613.8H210M196 725.5H210M196 837.1H210M196 948.8H210M196 1060.5H210M196 1172.2H210M196 1283.8H210M196 1395.5H210M196 1507.2H210M196 1618.8H210M196 1730.5H210" stroke="#fff" stroke-width="1.1"/><path d="M196 389.4H210M196 501.0H210M196 612.7H210M196 724.4H210M196 836.0H210M196 947.7H210M196 1059.4H210M196 1171.1H210M196 1282.7H210M196 1394.4H210M196 1506.1H210M196 1617.7H210M196 1729.4H210" stroke="#000" stroke-width="1.1"/><path d="M190 710 L190 733 L202 721.5 Z" fill="#000"/><text transform="translate(183,1842) rotate(-90)" text-anchor="middle">-110</text></svg>
<div id="vscroll" class="abs"></div><i id="vthumb" class="abs"></i>
<div id="hscroll" class="abs"></div><i id="hthumb" class="abs"></i><i id="hcorner" class="abs"></i>
<div id="zoomlbl" class="abs">10 &lt; 100</div>
<div id="cmdhist" class="abs"><div class="abs" style="left:10px;top:-27px;font-size:25px;color:#000;white-space:nowrap;letter-spacing:6px">&nbsp;&nbsp;&nbsp;&nbsp;&nbsp;&nbsp;&nbsp;&nbsp;&nbsp;&nbsp;&nbsp;&nbsp;&nbsp;&nbsp;&nbsp;&nbsp;&nbsp;&nbsp;&nbsp;&nbsp;&nbsp;&nbsp;&nbsp;&nbsp;&nbsp;&nbsp;&nbsp;&nbsp;&nbsp;&nbsp;g , g , , , ,</div><div class="abs" style="left:10px;top:3px;font-size:26.7px;letter-spacing:.3px;line-height:32px;color:#0b17d0;white-space:nowrap"><i>Command:</i> blockedit<br><i>Command:</i> blockedit</div><i class="abs" style="left:2410px;top:0;width:30px;height:78px;background:#fafafa;border-left:1px solid #e6e6e6"></i><i class="abs" style="left:2419px;top:34px;width:15px;height:36px;border-radius:8px;background:#c1c1c1"></i></div>
<div id="cmdline" class="abs"><span class="abs" style="left:1px;top:11px;font-size:26.7px;letter-spacing:.5px;line-height:34px;color:#000">Command:</span><div class="abs" style="left:2387px;top:2px;width:52px;height:51px;background:#f6f6f6;border:2px solid #b7b7b7"></div><div class="abs" style="left:2400px;top:18px;width:28px;height:20px;border:1.5px solid #222;border-top:6px solid #000;background:#efefef;border-radius:1px"></div></div>
<div id="rpanel" class="abs"></div>
<i class="abs" style="left:2606px;top:200px;width:3px;height:1794px;background:#f0f0f0"></i>
<i class="abs" style="left:2608px;top:200px;width:2px;height:1794px;background:#a9a9a9"></i>
<i class="abs" style="left:3120px;top:200px;width:2px;height:1794px;background:#c4c4c4"></i>
<div class="abs dockhdr" style="top:200px">Block List</div>
<div class="abs" style="left:2612px;top:205px;line-height:0"><svg width="70" height="34" viewBox="0 0 70 34" ><circle cx="16" cy="17" r="13.5" fill="#585858" stroke="#3e3e3e" stroke-width="2"/><path d="M10 11 L22 23 M22 11 L10 23" stroke="#f2f2f2" stroke-width="4.2"/><circle cx="52" cy="17" r="13.5" fill="#585858" stroke="#3e3e3e" stroke-width="2"/><rect x="48" y="11.5" width="10" height="8" rx="1.5" fill="none" stroke="#f2f2f2" stroke-width="2.2"/><rect x="44.5" y="15.5" width="10" height="8" rx="1.5" fill="#585858" stroke="#f2f2f2" stroke-width="2.2"/></svg></div>
<div class="abs btnrow" style="top:245px;height:51px">
<div class="btn" style="left:1.0px;width:60.9px;height:47px"><svg width="60.9" height="47" viewBox="0 0 60.9 47"><g transform="translate(14.4,11.5)"><path d="M0.50 13.00C0.17 10.53 0.00 10.33 1.50 7.20C3.00 4.07 1.50 5.47 5.00 3.60C8.50 1.73 7.33 2.20 12.00 1.60C16.67 1.00 15.00 0.87 19.00 1.80C23.00 2.73 20.80 2.53 24.00 4.40C27.20 6.27 27.73 6.00 28.60 7.40C29.47 8.80 25.97 6.87 26.60 8.60C27.23 10.33 29.70 10.27 30.50 12.60C31.30 14.93 30.83 13.73 29.00 15.60C27.17 17.47 27.33 16.20 25.00 18.20C22.67 20.20 24.33 20.00 22.00 21.60C19.67 23.20 20.67 22.37 18.00 23.00C15.33 23.63 17.00 23.97 14.00 23.50C11.00 23.03 12.00 23.43 9.00 21.60C6.00 19.77 7.17 20.33 5.00 18.00C2.83 15.67 4.00 16.27 2.50 14.60C1.00 12.93 0.83 15.47 0.50 13.00Z" fill="#000"/><path d="M5.50 12.50C5.47 10.10 5.83 10.43 7.40 8.80C8.97 7.17 9.13 6.53 10.20 7.60C11.27 8.67 9.67 9.33 10.60 12.00C11.53 14.67 11.20 14.10 13.00 15.60C14.80 17.10 14.00 16.87 16.00 16.50C18.00 16.13 17.50 16.80 19.00 14.50C20.50 12.20 19.43 11.77 20.50 9.60C21.57 7.43 21.03 8.00 22.20 8.00C23.37 8.00 23.23 8.20 24.00 9.60C24.77 11.00 25.00 10.33 24.50 12.20C24.00 14.07 24.33 13.27 22.50 15.20C20.67 17.13 21.50 16.57 19.00 18.00C16.50 19.43 17.67 19.33 15.00 19.50C12.33 19.67 13.50 19.67 11.00 18.50C8.50 17.33 9.33 18.00 7.50 16.00C5.67 14.00 5.53 14.90 5.50 12.50Z" fill="#fff"/><ellipse cx="13.8" cy="11.2" rx="1.25" ry="2.7" transform="rotate(-8 13.8 11.2)" fill="#fff"/><path d="M6 21.5 l1.2 1.6 M8.5 22.6 l.8 1.5 M11 23.4 l.5 1.4 M13.5 23.8 l.2 1.3 M16.5 23.6 l-.3 1.2" stroke="#000" stroke-width=".8" opacity=".7"/></g></svg></div>
<div class="btn" style="left:64.9px;width:60.9px;height:47px"><svg width="60.9" height="47" viewBox="0 0 60.9 47"><g transform="translate(14.4,11.5)"><path d="M0.50 13.00C0.17 10.53 0.00 10.33 1.50 7.20C3.00 4.07 1.50 5.47 5.00 3.60C8.50 1.73 7.33 2.20 12.00 1.60C16.67 1.00 15.00 0.87 19.00 1.80C23.00 2.73 20.80 2.53 24.00 4.40C27.20 6.27 27.73 6.00 28.60 7.40C29.47 8.80 25.97 6.87 26.60 8.60C27.23 10.33 29.70 10.27 30.50 12.60C31.30 14.93 30.83 13.73 29.00 15.60C27.17 17.47 27.33 16.20 25.00 18.20C22.67 20.20 24.33 20.00 22.00 21.60C19.67 23.20 20.67 22.37 18.00 23.00C15.33 23.63 17.00 23.97 14.00 23.50C11.00 23.03 12.00 23.43 9.00 21.60C6.00 19.77 7.17 20.33 5.00 18.00C2.83 15.67 4.00 16.27 2.50 14.60C1.00 12.93 0.83 15.47 0.50 13.00Z" fill="#a9a9a9"/><path d="M5.50 12.50C5.47 10.10 5.83 10.43 7.40 8.80C8.97 7.17 9.13 6.53 10.20 7.60C11.27 8.67 9.67 9.33 10.60 12.00C11.53 14.67 11.20 14.10 13.00 15.60C14.80 17.10 14.00 16.87 16.00 16.50C18.00 16.13 17.50 16.80 19.00 14.50C20.50 12.20 19.43 11.77 20.50 9.60C21.57 7.43 21.03 8.00 22.20 8.00C23.37 8.00 23.23 8.20 24.00 9.60C24.77 11.00 25.00 10.33 24.50 12.20C24.00 14.07 24.33 13.27 22.50 15.20C20.67 17.13 21.50 16.57 19.00 18.00C16.50 19.43 17.67 19.33 15.00 19.50C12.33 19.67 13.50 19.67 11.00 18.50C8.50 17.33 9.33 18.00 7.50 16.00C5.67 14.00 5.53 14.90 5.50 12.50Z" fill="#fff"/><ellipse cx="13.8" cy="11.2" rx="1.25" ry="2.7" transform="rotate(-8 13.8 11.2)" fill="#fff"/><path d="M6 21.5 l1.2 1.6 M8.5 22.6 l.8 1.5 M11 23.4 l.5 1.4 M13.5 23.8 l.2 1.3 M16.5 23.6 l-.3 1.2" stroke="#a9a9a9" stroke-width=".8" opacity=".7"/></g></svg></div>
<div class="btn" style="left:128.8px;width:60.9px;height:47px"><svg width="60.9" height="47" viewBox="0 0 60.9 47"><path d="M27.8 13.5 h5.2 v8.4 h8.4 v5.2 h-8.4 v8.4 h-5.2 v-8.4 h-8.4 v-5.2 h8.4 Z" fill="#ff1a1a" stroke="#111" stroke-width="1.2"/></svg></div>
<div class="btn" style="left:192.7px;width:60.9px;height:47px"><svg width="60.9" height="47" viewBox="0 0 60.9 47"><rect x="18.9" y="21.9" width="23" height="5.2" fill="#f08088" stroke="#caa" stroke-width="1"/></svg></div>
<div class="btn" style="left:256.6px;width:60.9px;height:47px"><svg width="60.9" height="47" viewBox="0 0 60.9 47"><text x="30.4" y="34.5" font-family="Liberation Sans, DejaVu Sans, sans-serif" font-size="24" text-anchor="middle" fill="#9a9a9a">a|b</text></svg></div>
<div class="btn" style="left:320.5px;width:60.9px;height:47px"><svg width="60.9" height="47" viewBox="0 0 60.9 47"><g transform="translate(15.4,8.5) scale(1.08)"><g transform="translate(2,28) rotate(-48)"><path d="M0 0 L7 -3.6 L33 -3.6 L33 3.6 L7 3.6 Z" fill="#e0a83a" stroke="#8a5a14" stroke-width="1"/><path d="M7 -1 H33" stroke="#f6d68a" stroke-width="1.6"/><path d="M0 0 L7 -3.6 L7 3.6 Z" fill="#e7cfa4" stroke="#8a5a14" stroke-width=".8"/><path d="M0 0 L2.6 -1.3 L2.6 1.3 Z" fill="#222"/><path d="M33 -3.6 h3.4 q2 0 2 3.6 q0 3.6 -2 3.6 h-3.4 Z" fill="#ee2a2a" stroke="#9a1212" stroke-width=".8"/></g></g></svg></div>
<div class="btn" style="left:384.4px;width:60.9px;height:47px"><svg width="60.9" height="47" viewBox="0 0 60.9 47"><rect x="21.4" y="12.5" width="20" height="24" fill="#ececf4" stroke="#d4d4dc" stroke-width="1"/><path d="M22.4 15.5 q10 -2 10 8 v4 h5 l-7.5 9 l-7.5 -9 h5 v-4 q0 -5 -5 -5 Z" fill="#8fa6f4" stroke="#7088e0" stroke-width="1"/></svg></div>
<div class="btn" style="left:448.3px;width:60.9px;height:47px"><svg width="60.9" height="47" viewBox="0 0 60.9 47"><rect x="20.9" y="15.0" width="19" height="19" rx="3" fill="#ee7a58" stroke="#d55a3a" stroke-width="1.2"/><path d="M25.4 19.5 l10 10 M35.5 19.5 l-10 10" stroke="#fff" stroke-width="3"/></svg></div>
</div>
<div class="abs" style="left:2611px;top:296px;width:510px;height:281px;background:#fff;border-top:2px solid #9a9a9a;border-bottom:3px solid #ababab"></div>
<div class="row" style="left:2612px;top:298.0px;background:#0b64d8;color:#fff;"><span style="position:absolute;left:99px;top:0">Model (*Model_Space)</span><span style="position:absolute;left:10.5px;top:6px;line-height:0"><svg width="32" height="26" viewBox="0 0 32 26" ><path d="M0.50 13.00C0.17 10.53 0.00 10.33 1.50 7.20C3.00 4.07 1.50 5.47 5.00 3.60C8.50 1.73 7.33 2.20 12.00 1.60C16.67 1.00 15.00 0.87 19.00 1.80C23.00 2.73 20.80 2.53 24.00 4.40C27.20 6.27 27.73 6.00 28.60 7.40C29.47 8.80 25.97 6.87 26.60 8.60C27.23 10.33 29.70 10.27 30.50 12.60C31.30 14.93 30.83 13.73 29.00 15.60C27.17 17.47 27.33 16.20 25.00 18.20C22.67 20.20 24.33 20.00 22.00 21.60C19.67 23.20 20.67 22.37 18.00 23.00C15.33 23.63 17.00 23.97 14.00 23.50C11.00 23.03 12.00 23.43 9.00 21.60C6.00 19.77 7.17 20.33 5.00 18.00C2.83 15.67 4.00 16.27 2.50 14.60C1.00 12.93 0.83 15.47 0.50 13.00Z" fill="#1c2f4d"/><path d="M5.50 12.50C5.47 10.10 5.83 10.43 7.40 8.80C8.97 7.17 9.13 6.53 10.20 7.60C11.27 8.67 9.67 9.33 10.60 12.00C11.53 14.67 11.20 14.10 13.00 15.60C14.80 17.10 14.00 16.87 16.00 16.50C18.00 16.13 17.50 16.80 19.00 14.50C20.50 12.20 19.43 11.77 20.50 9.60C21.57 7.43 21.03 8.00 22.20 8.00C23.37 8.00 23.23 8.20 24.00 9.60C24.77 11.00 25.00 10.33 24.50 12.20C24.00 14.07 24.33 13.27 22.50 15.20C20.67 17.13 21.50 16.57 19.00 18.00C16.50 19.43 17.67 19.33 15.00 19.50C12.33 19.67 13.50 19.67 11.00 18.50C8.50 17.33 9.33 18.00 7.50 16.00C5.67 14.00 5.53 14.90 5.50 12.50Z" fill="#fff"/><ellipse cx="13.8" cy="11.2" rx="1.25" ry="2.7" transform="rotate(-8 13.8 11.2)" fill="#fff"/><path d="M6 21.5 l1.2 1.6 M8.5 22.6 l.8 1.5 M11 23.4 l.5 1.4 M13.5 23.8 l.2 1.3 M16.5 23.6 l-.3 1.2" stroke="#1c2f4d" stroke-width=".8" opacity=".7"/></svg></span><span style="position:absolute;left:56px;top:5px;line-height:0"><svg width="28" height="30" viewBox="0 0 28 30" ><g transform="translate(2,28) rotate(-48)"><path d="M0 0 L7 -3.6 L33 -3.6 L33 3.6 L7 3.6 Z" fill="#e0a83a" stroke="#8a5a14" stroke-width="1"/><path d="M7 -1 H33" stroke="#f6d68a" stroke-width="1.6"/><path d="M0 0 L7 -3.6 L7 3.6 Z" fill="#e7cfa4" stroke="#8a5a14" stroke-width=".8"/><path d="M0 0 L2.6 -1.3 L2.6 1.3 Z" fill="#222"/><path d="M33 -3.6 h3.4 q2 0 2 3.6 q0 3.6 -2 3.6 h-3.4 Z" fill="#ee2a2a" stroke="#9a1212" stroke-width=".8"/></g></svg></span></div>
<div class="row" style="left:2612px;top:337.9px;"><span style="position:absolute;left:99px;top:0">Layout (*Paper_Space)</span><span style="position:absolute;left:10.5px;top:6px;line-height:0"><svg width="32" height="26" viewBox="0 0 32 26" ><path d="M0.50 13.00C0.17 10.53 0.00 10.33 1.50 7.20C3.00 4.07 1.50 5.47 5.00 3.60C8.50 1.73 7.33 2.20 12.00 1.60C16.67 1.00 15.00 0.87 19.00 1.80C23.00 2.73 20.80 2.53 24.00 4.40C27.20 6.27 27.73 6.00 28.60 7.40C29.47 8.80 25.97 6.87 26.60 8.60C27.23 10.33 29.70 10.27 30.50 12.60C31.30 14.93 30.83 13.73 29.00 15.60C27.17 17.47 27.33 16.20 25.00 18.20C22.67 20.20 24.33 20.00 22.00 21.60C19.67 23.20 20.67 22.37 18.00 23.00C15.33 23.63 17.00 23.97 14.00 23.50C11.00 23.03 12.00 23.43 9.00 21.60C6.00 19.77 7.17 20.33 5.00 18.00C2.83 15.67 4.00 16.27 2.50 14.60C1.00 12.93 0.83 15.47 0.50 13.00Z" fill="#000"/><path d="M5.50 12.50C5.47 10.10 5.83 10.43 7.40 8.80C8.97 7.17 9.13 6.53 10.20 7.60C11.27 8.67 9.67 9.33 10.60 12.00C11.53 14.67 11.20 14.10 13.00 15.60C14.80 17.10 14.00 16.87 16.00 16.50C18.00 16.13 17.50 16.80 19.00 14.50C20.50 12.20 19.43 11.77 20.50 9.60C21.57 7.43 21.03 8.00 22.20 8.00C23.37 8.00 23.23 8.20 24.00 9.60C24.77 11.00 25.00 10.33 24.50 12.20C24.00 14.07 24.33 13.27 22.50 15.20C20.67 17.13 21.50 16.57 19.00 18.00C16.50 19.43 17.67 19.33 15.00 19.50C12.33 19.67 13.50 19.67 11.00 18.50C8.50 17.33 9.33 18.00 7.50 16.00C5.67 14.00 5.53 14.90 5.50 12.50Z" fill="#fff"/><ellipse cx="13.8" cy="11.2" rx="1.25" ry="2.7" transform="rotate(-8 13.8 11.2)" fill="#fff"/><path d="M6 21.5 l1.2 1.6 M8.5 22.6 l.8 1.5 M11 23.4 l.5 1.4 M13.5 23.8 l.2 1.3 M16.5 23.6 l-.3 1.2" stroke="#000" stroke-width=".8" opacity=".7"/></svg></span></div>
<div class="row" style="left:2612px;top:377.8px;"><span style="position:absolute;left:99px;top:0">Layout2 (*Paper_Space3)</span><span style="position:absolute;left:10.5px;top:6px;line-height:0"><svg width="32" height="26" viewBox="0 0 32 26" ><path d="M0.50 13.00C0.17 10.53 0.00 10.33 1.50 7.20C3.00 4.07 1.50 5.47 5.00 3.60C8.50 1.73 7.33 2.20 12.00 1.60C16.67 1.00 15.00 0.87 19.00 1.80C23.00 2.73 20.80 2.53 24.00 4.40C27.20 6.27 27.73 6.00 28.60 7.40C29.47 8.80 25.97 6.87 26.60 8.60C27.23 10.33 29.70 10.27 30.50 12.60C31.30 14.93 30.83 13.73 29.00 15.60C27.17 17.47 27.33 16.20 25.00 18.20C22.67 20.20 24.33 20.00 22.00 21.60C19.67 23.20 20.67 22.37 18.00 23.00C15.33 23.63 17.00 23.97 14.00 23.50C11.00 23.03 12.00 23.43 9.00 21.60C6.00 19.77 7.17 20.33 5.00 18.00C2.83 15.67 4.00 16.27 2.50 14.60C1.00 12.93 0.83 15.47 0.50 13.00Z" fill="#000"/><path d="M5.50 12.50C5.47 10.10 5.83 10.43 7.40 8.80C8.97 7.17 9.13 6.53 10.20 7.60C11.27 8.67 9.67 9.33 10.60 12.00C11.53 14.67 11.20 14.10 13.00 15.60C14.80 17.10 14.00 16.87 16.00 16.50C18.00 16.13 17.50 16.80 19.00 14.50C20.50 12.20 19.43 11.77 20.50 9.60C21.57 7.43 21.03 8.00 22.20 8.00C23.37 8.00 23.23 8.20 24.00 9.60C24.77 11.00 25.00 10.33 24.50 12.20C24.00 14.07 24.33 13.27 22.50 15.20C20.67 17.13 21.50 16.57 19.00 18.00C16.50 19.43 17.67 19.33 15.00 19.50C12.33 19.67 13.50 19.67 11.00 18.50C8.50 17.33 9.33 18.00 7.50 16.00C5.67 14.00 5.53 14.90 5.50 12.50Z" fill="#fff"/><ellipse cx="13.8" cy="11.2" rx="1.25" ry="2.7" transform="rotate(-8 13.8 11.2)" fill="#fff"/><path d="M6 21.5 l1.2 1.6 M8.5 22.6 l.8 1.5 M11 23.4 l.5 1.4 M13.5 23.8 l.2 1.3 M16.5 23.6 l-.3 1.2" stroke="#000" stroke-width=".8" opacity=".7"/></svg></span></div>
<div class="row" style="left:2612px;top:417.7px;"><span style="position:absolute;left:99px;top:0">Border</span><span style="position:absolute;left:10.5px;top:6px;line-height:0"><svg width="32" height="26" viewBox="0 0 32 26" ><path d="M0.50 13.00C0.17 10.53 0.00 10.33 1.50 7.20C3.00 4.07 1.50 5.47 5.00 3.60C8.50 1.73 7.33 2.20 12.00 1.60C16.67 1.00 15.00 0.87 19.00 1.80C23.00 2.73 20.80 2.53 24.00 4.40C27.20 6.27 27.73 6.00 28.60 7.40C29.47 8.80 25.97 6.87 26.60 8.60C27.23 10.33 29.70 10.27 30.50 12.60C31.30 14.93 30.83 13.73 29.00 15.60C27.17 17.47 27.33 16.20 25.00 18.20C22.67 20.20 24.33 20.00 22.00 21.60C19.67 23.20 20.67 22.37 18.00 23.00C15.33 23.63 17.00 23.97 14.00 23.50C11.00 23.03 12.00 23.43 9.00 21.60C6.00 19.77 7.17 20.33 5.00 18.00C2.83 15.67 4.00 16.27 2.50 14.60C1.00 12.93 0.83 15.47 0.50 13.00Z" fill="#000"/><path d="M5.50 12.50C5.47 10.10 5.83 10.43 7.40 8.80C8.97 7.17 9.13 6.53 10.20 7.60C11.27 8.67 9.67 9.33 10.60 12.00C11.53 14.67 11.20 14.10 13.00 15.60C14.80 17.10 14.00 16.87 16.00 16.50C18.00 16.13 17.50 16.80 19.00 14.50C20.50 12.20 19.43 11.77 20.50 9.60C21.57 7.43 21.03 8.00 22.20 8.00C23.37 8.00 23.23 8.20 24.00 9.60C24.77 11.00 25.00 10.33 24.50 12.20C24.00 14.07 24.33 13.27 22.50 15.20C20.67 17.13 21.50 16.57 19.00 18.00C16.50 19.43 17.67 19.33 15.00 19.50C12.33 19.67 13.50 19.67 11.00 18.50C8.50 17.33 9.33 18.00 7.50 16.00C5.67 14.00 5.53 14.90 5.50 12.50Z" fill="#fff"/><ellipse cx="13.8" cy="11.2" rx="1.25" ry="2.7" transform="rotate(-8 13.8 11.2)" fill="#fff"/><path d="M6 21.5 l1.2 1.6 M8.5 22.6 l.8 1.5 M11 23.4 l.5 1.4 M13.5 23.8 l.2 1.3 M16.5 23.6 l-.3 1.2" stroke="#000" stroke-width=".8" opacity=".7"/></svg></span></div>
<div class="row" style="left:2612px;top:457.6px;"><span style="position:absolute;left:99px;top:0">Revision</span><span style="position:absolute;left:10.5px;top:6px;line-height:0"><svg width="32" height="26" viewBox="0 0 32 26" ><path d="M0.50 13.00C0.17 10.53 0.00 10.33 1.50 7.20C3.00 4.07 1.50 5.47 5.00 3.60C8.50 1.73 7.33 2.20 12.00 1.60C16.67 1.00 15.00 0.87 19.00 1.80C23.00 2.73 20.80 2.53 24.00 4.40C27.20 6.27 27.73 6.00 28.60 7.40C29.47 8.80 25.97 6.87 26.60 8.60C27.23 10.33 29.70 10.27 30.50 12.60C31.30 14.93 30.83 13.73 29.00 15.60C27.17 17.47 27.33 16.20 25.00 18.20C22.67 20.20 24.33 20.00 22.00 21.60C19.67 23.20 20.67 22.37 18.00 23.00C15.33 23.63 17.00 23.97 14.00 23.50C11.00 23.03 12.00 23.43 9.00 21.60C6.00 19.77 7.17 20.33 5.00 18.00C2.83 15.67 4.00 16.27 2.50 14.60C1.00 12.93 0.83 15.47 0.50 13.00Z" fill="#000"/><path d="M5.50 12.50C5.47 10.10 5.83 10.43 7.40 8.80C8.97 7.17 9.13 6.53 10.20 7.60C11.27 8.67 9.67 9.33 10.60 12.00C11.53 14.67 11.20 14.10 13.00 15.60C14.80 17.10 14.00 16.87 16.00 16.50C18.00 16.13 17.50 16.80 19.00 14.50C20.50 12.20 19.43 11.77 20.50 9.60C21.57 7.43 21.03 8.00 22.20 8.00C23.37 8.00 23.23 8.20 24.00 9.60C24.77 11.00 25.00 10.33 24.50 12.20C24.00 14.07 24.33 13.27 22.50 15.20C20.67 17.13 21.50 16.57 19.00 18.00C16.50 19.43 17.67 19.33 15.00 19.50C12.33 19.67 13.50 19.67 11.00 18.50C8.50 17.33 9.33 18.00 7.50 16.00C5.67 14.00 5.53 14.90 5.50 12.50Z" fill="#fff"/><ellipse cx="13.8" cy="11.2" rx="1.25" ry="2.7" transform="rotate(-8 13.8 11.2)" fill="#fff"/><path d="M6 21.5 l1.2 1.6 M8.5 22.6 l.8 1.5 M11 23.4 l.5 1.4 M13.5 23.8 l.2 1.3 M16.5 23.6 l-.3 1.2" stroke="#000" stroke-width=".8" opacity=".7"/></svg></span></div>
<div class="row" style="left:2612px;top:497.5px;"><span style="position:absolute;left:99px;top:0">Title</span><span style="position:absolute;left:10.5px;top:6px;line-height:0"><svg width="32" height="26" viewBox="0 0 32 26" ><path d="M0.50 13.00C0.17 10.53 0.00 10.33 1.50 7.20C3.00 4.07 1.50 5.47 5.00 3.60C8.50 1.73 7.33 2.20 12.00 1.60C16.67 1.00 15.00 0.87 19.00 1.80C23.00 2.73 20.80 2.53 24.00 4.40C27.20 6.27 27.73 6.00 28.60 7.40C29.47 8.80 25.97 6.87 26.60 8.60C27.23 10.33 29.70 10.27 30.50 12.60C31.30 14.93 30.83 13.73 29.00 15.60C27.17 17.47 27.33 16.20 25.00 18.20C22.67 20.20 24.33 20.00 22.00 21.60C19.67 23.20 20.67 22.37 18.00 23.00C15.33 23.63 17.00 23.97 14.00 23.50C11.00 23.03 12.00 23.43 9.00 21.60C6.00 19.77 7.17 20.33 5.00 18.00C2.83 15.67 4.00 16.27 2.50 14.60C1.00 12.93 0.83 15.47 0.50 13.00Z" fill="#000"/><path d="M5.50 12.50C5.47 10.10 5.83 10.43 7.40 8.80C8.97 7.17 9.13 6.53 10.20 7.60C11.27 8.67 9.67 9.33 10.60 12.00C11.53 14.67 11.20 14.10 13.00 15.60C14.80 17.10 14.00 16.87 16.00 16.50C18.00 16.13 17.50 16.80 19.00 14.50C20.50 12.20 19.43 11.77 20.50 9.60C21.57 7.43 21.03 8.00 22.20 8.00C23.37 8.00 23.23 8.20 24.00 9.60C24.77 11.00 25.00 10.33 24.50 12.20C24.00 14.07 24.33 13.27 22.50 15.20C20.67 17.13 21.50 16.57 19.00 18.00C16.50 19.43 17.67 19.33 15.00 19.50C12.33 19.67 13.50 19.67 11.00 18.50C8.50 17.33 9.33 18.00 7.50 16.00C5.67 14.00 5.53 14.90 5.50 12.50Z" fill="#fff"/><ellipse cx="13.8" cy="11.2" rx="1.25" ry="2.7" transform="rotate(-8 13.8 11.2)" fill="#fff"/><path d="M6 21.5 l1.2 1.6 M8.5 22.6 l.8 1.5 M11 23.4 l.5 1.4 M13.5 23.8 l.2 1.3 M16.5 23.6 l-.3 1.2" stroke="#000" stroke-width=".8" opacity=".7"/></svg></span></div>
<div class="abs dockhdr" style="top:579px">Layer List</div>
<div class="abs" style="left:2612px;top:585px;line-height:0"><svg width="70" height="34" viewBox="0 0 70 34" ><circle cx="16" cy="17" r="13.5" fill="#585858" stroke="#3e3e3e" stroke-width="2"/><path d="M10 11 L22 23 M22 11 L10 23" stroke="#f2f2f2" stroke-width="4.2"/><circle cx="52" cy="17" r="13.5" fill="#585858" stroke="#3e3e3e" stroke-width="2"/><rect x="48" y="11.5" width="10" height="8" rx="1.5" fill="none" stroke="#f2f2f2" stroke-width="2.2"/><rect x="44.5" y="15.5" width="10" height="8" rx="1.5" fill="#585858" stroke="#f2f2f2" stroke-width="2.2"/></svg></div>
<div class="abs btnrow" style="top:624px;height:53px">
<div class="btn" style="left:1.0px;width:99.1px;height:48px"><svg width="99.1" height="48" viewBox="0 0 99.1 48"><g transform="translate(33.5,12.0)"><path d="M0.50 13.00C0.17 10.53 0.00 10.33 1.50 7.20C3.00 4.07 1.50 5.47 5.00 3.60C8.50 1.73 7.33 2.20 12.00 1.60C16.67 1.00 15.00 0.87 19.00 1.80C23.00 2.73 20.80 2.53 24.00 4.40C27.20 6.27 27.73 6.00 28.60 7.40C29.47 8.80 25.97 6.87 26.60 8.60C27.23 10.33 29.70 10.27 30.50 12.60C31.30 14.93 30.83 13.73 29.00 15.60C27.17 17.47 27.33 16.20 25.00 18.20C22.67 20.20 24.33 20.00 22.00 21.60C19.67 23.20 20.67 22.37 18.00 23.00C15.33 23.63 17.00 23.97 14.00 23.50C11.00 23.03 12.00 23.43 9.00 21.60C6.00 19.77 7.17 20.33 5.00 18.00C2.83 15.67 4.00 16.27 2.50 14.60C1.00 12.93 0.83 15.47 0.50 13.00Z" fill="#000"/><path d="M5.50 12.50C5.47 10.10 5.83 10.43 7.40 8.80C8.97 7.17 9.13 6.53 10.20 7.60C11.27 8.67 9.67 9.33 10.60 12.00C11.53 14.67 11.20 14.10 13.00 15.60C14.80 17.10 14.00 16.87 16.00 16.50C18.00 16.13 17.50 16.80 19.00 14.50C20.50 12.20 19.43 11.77 20.50 9.60C21.57 7.43 21.03 8.00 22.20 8.00C23.37 8.00 23.23 8.20 24.00 9.60C24.77 11.00 25.00 10.33 24.50 12.20C24.00 14.07 24.33 13.27 22.50 15.20C20.67 17.13 21.50 16.57 19.00 18.00C16.50 19.43 17.67 19.33 15.00 19.50C12.33 19.67 13.50 19.67 11.00 18.50C8.50 17.33 9.33 18.00 7.50 16.00C5.67 14.00 5.53 14.90 5.50 12.50Z" fill="#fff"/><ellipse cx="13.8" cy="11.2" rx="1.25" ry="2.7" transform="rotate(-8 13.8 11.2)" fill="#fff"/><path d="M6 21.5 l1.2 1.6 M8.5 22.6 l.8 1.5 M11 23.4 l.5 1.4 M13.5 23.8 l.2 1.3 M16.5 23.6 l-.3 1.2" stroke="#000" stroke-width=".8" opacity=".7"/></g></svg></div>
<div class="btn" style="left:103.1px;width:99.1px;height:48px"><svg width="99.1" height="48" viewBox="0 0 99.1 48"><g transform="translate(33.5,12.0)"><path d="M0.50 13.00C0.17 10.53 0.00 10.33 1.50 7.20C3.00 4.07 1.50 5.47 5.00 3.60C8.50 1.73 7.33 2.20 12.00 1.60C16.67 1.00 15.00 0.87 19.00 1.80C23.00 2.73 20.80 2.53 24.00 4.40C27.20 6.27 27.73 6.00 28.60 7.40C29.47 8.80 25.97 6.87 26.60 8.60C27.23 10.33 29.70 10.27 30.50 12.60C31.30 14.93 30.83 13.73 29.00 15.60C27.17 17.47 27.33 16.20 25.00 18.20C22.67 20.20 24.33 20.00 22.00 21.60C19.67 23.20 20.67 22.37 18.00 23.00C15.33 23.63 17.00 23.97 14.00 23.50C11.00 23.03 12.00 23.43 9.00 21.60C6.00 19.77 7.17 20.33 5.00 18.00C2.83 15.67 4.00 16.27 2.50 14.60C1.00 12.93 0.83 15.47 0.50 13.00Z" fill="#a9a9a9"/><path d="M5.50 12.50C5.47 10.10 5.83 10.43 7.40 8.80C8.97 7.17 9.13 6.53 10.20 7.60C11.27 8.67 9.67 9.33 10.60 12.00C11.53 14.67 11.20 14.10 13.00 15.60C14.80 17.10 14.00 16.87 16.00 16.50C18.00 16.13 17.50 16.80 19.00 14.50C20.50 12.20 19.43 11.77 20.50 9.60C21.57 7.43 21.03 8.00 22.20 8.00C23.37 8.00 23.23 8.20 24.00 9.60C24.77 11.00 25.00 10.33 24.50 12.20C24.00 14.07 24.33 13.27 22.50 15.20C20.67 17.13 21.50 16.57 19.00 18.00C16.50 19.43 17.67 19.33 15.00 19.50C12.33 19.67 13.50 19.67 11.00 18.50C8.50 17.33 9.33 18.00 7.50 16.00C5.67 14.00 5.53 14.90 5.50 12.50Z" fill="#fff"/><ellipse cx="13.8" cy="11.2" rx="1.25" ry="2.7" transform="rotate(-8 13.8 11.2)" fill="#fff"/><path d="M6 21.5 l1.2 1.6 M8.5 22.6 l.8 1.5 M11 23.4 l.5 1.4 M13.5 23.8 l.2 1.3 M16.5 23.6 l-.3 1.2" stroke="#a9a9a9" stroke-width=".8" opacity=".7"/></g></svg></div>
<div class="btn" style="left:205.2px;width:99.1px;height:48px"><svg width="99.1" height="48" viewBox="0 0 99.1 48"><path d="M46.9 14.0 h5.2 v8.4 h8.4 v5.2 h-8.4 v8.4 h-5.2 v-8.4 h-8.4 v-5.2 h8.4 Z" fill="#ff1a1a" stroke="#111" stroke-width="1.2"/></svg></div>
<div class="btn" style="left:307.3px;width:99.1px;height:48px"><svg width="99.1" height="48" viewBox="0 0 99.1 48"><rect x="38.0" y="22.4" width="23" height="5.2" fill="#ff1a1a" stroke="#111" stroke-width="1.2"/></svg></div>
<div class="btn" style="left:409.4px;width:99.1px;height:48px"><svg width="99.1" height="48" viewBox="0 0 99.1 48"><g transform="translate(34.5,9.0) scale(1.08)"><g transform="translate(2,28) rotate(-48)"><path d="M0 0 L7 -3.6 L33 -3.6 L33 3.6 L7 3.6 Z" fill="#e0a83a" stroke="#8a5a14" stroke-width="1"/><path d="M7 -1 H33" stroke="#f6d68a" stroke-width="1.6"/><path d="M0 0 L7 -3.6 L7 3.6 Z" fill="#e7cfa4" stroke="#8a5a14" stroke-width=".8"/><path d="M0 0 L2.6 -1.3 L2.6 1.3 Z" fill="#222"/><path d="M33 -3.6 h3.4 q2 0 2 3.6 q0 3.6 -2 3.6 h-3.4 Z" fill="#ee2a2a" stroke="#9a1212" stroke-width=".8"/></g></g></svg></div>
</div>
<div class="abs" style="left:2611px;top:676px;width:510px;height:1318px;background:#fff;border-top:2px solid #9a9a9a"></div>
<div class="row lrow" style="left:2612px;top:678.0px;"><i class="sw" style="background:#000"></i><span style="position:absolute;left:55px;top:0">0</span><span style="position:absolute;left:431px;top:7px;line-height:0"><svg width="32" height="26" viewBox="0 0 32 26" ><path d="M0.50 13.00C0.17 10.53 0.00 10.33 1.50 7.20C3.00 4.07 1.50 5.47 5.00 3.60C8.50 1.73 7.33 2.20 12.00 1.60C16.67 1.00 15.00 0.87 19.00 1.80C23.00 2.73 20.80 2.53 24.00 4.40C27.20 6.27 27.73 6.00 28.60 7.40C29.47 8.80 25.97 6.87 26.60 8.60C27.23 10.33 29.70 10.27 30.50 12.60C31.30 14.93 30.83 13.73 29.00 15.60C27.17 17.47 27.33 16.20 25.00 18.20C22.67 20.20 24.33 20.00 22.00 21.60C19.67 23.20 20.67 22.37 18.00 23.00C15.33 23.63 17.00 23.97 14.00 23.50C11.00 23.03 12.00 23.43 9.00 21.60C6.00 19.77 7.17 20.33 5.00 18.00C2.83 15.67 4.00 16.27 2.50 14.60C1.00 12.93 0.83 15.47 0.50 13.00Z" fill="#000"/><path d="M5.50 12.50C5.47 10.10 5.83 10.43 7.40 8.80C8.97 7.17 9.13 6.53 10.20 7.60C11.27 8.67 9.67 9.33 10.60 12.00C11.53 14.67 11.20 14.10 13.00 15.60C14.80 17.10 14.00 16.87 16.00 16.50C18.00 16.13 17.50 16.80 19.00 14.50C20.50 12.20 19.43 11.77 20.50 9.60C21.57 7.43 21.03 8.00 22.20 8.00C23.37 8.00 23.23 8.20 24.00 9.60C24.77 11.00 25.00 10.33 24.50 12.20C24.00 14.07 24.33 13.27 22.50 15.20C20.67 17.13 21.50 16.57 19.00 18.00C16.50 19.43 17.67 19.33 15.00 19.50C12.33 19.67 13.50 19.67 11.00 18.50C8.50 17.33 9.33 18.00 7.50 16.00C5.67 14.00 5.53 14.90 5.50 12.50Z" fill="#fff"/><ellipse cx="13.8" cy="11.2" rx="1.25" ry="2.7" transform="rotate(-8 13.8 11.2)" fill="#fff"/><path d="M6 21.5 l1.2 1.6 M8.5 22.6 l.8 1.5 M11 23.4 l.5 1.4 M13.5 23.8 l.2 1.3 M16.5 23.6 l-.3 1.2" stroke="#000" stroke-width=".8" opacity=".7"/></svg></span><span style="position:absolute;left:480px;top:6px;line-height:0"><svg width="20" height="28" viewBox="0 0 20 28" ><path d="M3.6 14 V8.6 a6.4 6.4 0 0 1 12.8 0 V14" fill="none" stroke="#b3b3b3" stroke-width="2.2"/><rect x="0.6" y="13" width="18.8" height="14.4" fill="#b3b3b3"/></svg></span></div>
<div class="row lrow" style="left:2612px;top:718.0px;"><i class="sw" style="background:#ff33ff"></i><span style="position:absolute;left:55px;top:0">aux_iso</span><span style="position:absolute;left:431px;top:7px;line-height:0"><svg width="32" height="26" viewBox="0 0 32 26" ><path d="M0.50 13.00C0.17 10.53 0.00 10.33 1.50 7.20C3.00 4.07 1.50 5.47 5.00 3.60C8.50 1.73 7.33 2.20 12.00 1.60C16.67 1.00 15.00 0.87 19.00 1.80C23.00 2.73 20.80 2.53 24.00 4.40C27.20 6.27 27.73 6.00 28.60 7.40C29.47 8.80 25.97 6.87 26.60 8.60C27.23 10.33 29.70 10.27 30.50 12.60C31.30 14.93 30.83 13.73 29.00 15.60C27.17 17.47 27.33 16.20 25.00 18.20C22.67 20.20 24.33 20.00 22.00 21.60C19.67 23.20 20.67 22.37 18.00 23.00C15.33 23.63 17.00 23.97 14.00 23.50C11.00 23.03 12.00 23.43 9.00 21.60C6.00 19.77 7.17 20.33 5.00 18.00C2.83 15.67 4.00 16.27 2.50 14.60C1.00 12.93 0.83 15.47 0.50 13.00Z" fill="#b4b4b4"/><path d="M5.50 12.50C5.47 10.10 5.83 10.43 7.40 8.80C8.97 7.17 9.13 6.53 10.20 7.60C11.27 8.67 9.67 9.33 10.60 12.00C11.53 14.67 11.20 14.10 13.00 15.60C14.80 17.10 14.00 16.87 16.00 16.50C18.00 16.13 17.50 16.80 19.00 14.50C20.50 12.20 19.43 11.77 20.50 9.60C21.57 7.43 21.03 8.00 22.20 8.00C23.37 8.00 23.23 8.20 24.00 9.60C24.77 11.00 25.00 10.33 24.50 12.20C24.00 14.07 24.33 13.27 22.50 15.20C20.67 17.13 21.50 16.57 19.00 18.00C16.50 19.43 17.67 19.33 15.00 19.50C12.33 19.67 13.50 19.67 11.00 18.50C8.50 17.33 9.33 18.00 7.50 16.00C5.67 14.00 5.53 14.90 5.50 12.50Z" fill="#fff"/><ellipse cx="13.8" cy="11.2" rx="1.25" ry="2.7" transform="rotate(-8 13.8 11.2)" fill="#fff"/><path d="M6 21.5 l1.2 1.6 M8.5 22.6 l.8 1.5 M11 23.4 l.5 1.4 M13.5 23.8 l.2 1.3 M16.5 23.6 l-.3 1.2" stroke="#b4b4b4" stroke-width=".8" opacity=".7"/></svg></span><span style="position:absolute;left:480px;top:6px;line-height:0"><svg width="20" height="28" viewBox="0 0 20 28" ><path d="M3.6 14 V8.6 a6.4 6.4 0 0 1 12.8 0 V14" fill="none" stroke="#b3b3b3" stroke-width="2.2"/><rect x="0.6" y="13" width="18.8" height="14.4" fill="#b3b3b3"/></svg></span></div>
<div class="row lrow" style="left:2612px;top:758.0px;"><i class="sw" style="background:#000"></i><span style="position:absolute;left:55px;top:0">border</span><span style="position:absolute;left:431px;top:7px;line-height:0"><svg width="32" height="26" viewBox="0 0 32 26" ><path d="M0.50 13.00C0.17 10.53 0.00 10.33 1.50 7.20C3.00 4.07 1.50 5.47 5.00 3.60C8.50 1.73 7.33 2.20 12.00 1.60C16.67 1.00 15.00 0.87 19.00 1.80C23.00 2.73 20.80 2.53 24.00 4.40C27.20 6.27 27.73 6.00 28.60 7.40C29.47 8.80 25.97 6.87 26.60 8.60C27.23 10.33 29.70 10.27 30.50 12.60C31.30 14.93 30.83 13.73 29.00 15.60C27.17 17.47 27.33 16.20 25.00 18.20C22.67 20.20 24.33 20.00 22.00 21.60C19.67 23.20 20.67 22.37 18.00 23.00C15.33 23.63 17.00 23.97 14.00 23.50C11.00 23.03 12.00 23.43 9.00 21.60C6.00 19.77 7.17 20.33 5.00 18.00C2.83 15.67 4.00 16.27 2.50 14.60C1.00 12.93 0.83 15.47 0.50 13.00Z" fill="#000"/><path d="M5.50 12.50C5.47 10.10 5.83 10.43 7.40 8.80C8.97 7.17 9.13 6.53 10.20 7.60C11.27 8.67 9.67 9.33 10.60 12.00C11.53 14.67 11.20 14.10 13.00 15.60C14.80 17.10 14.00 16.87 16.00 16.50C18.00 16.13 17.50 16.80 19.00 14.50C20.50 12.20 19.43 11.77 20.50 9.60C21.57 7.43 21.03 8.00 22.20 8.00C23.37 8.00 23.23 8.20 24.00 9.60C24.77 11.00 25.00 10.33 24.50 12.20C24.00 14.07 24.33 13.27 22.50 15.20C20.67 17.13 21.50 16.57 19.00 18.00C16.50 19.43 17.67 19.33 15.00 19.50C12.33 19.67 13.50 19.67 11.00 18.50C8.50 17.33 9.33 18.00 7.50 16.00C5.67 14.00 5.53 14.90 5.50 12.50Z" fill="#fff"/><ellipse cx="13.8" cy="11.2" rx="1.25" ry="2.7" transform="rotate(-8 13.8 11.2)" fill="#fff"/><path d="M6 21.5 l1.2 1.6 M8.5 22.6 l.8 1.5 M11 23.4 l.5 1.4 M13.5 23.8 l.2 1.3 M16.5 23.6 l-.3 1.2" stroke="#000" stroke-width=".8" opacity=".7"/></svg></span><span style="position:absolute;left:480px;top:6px;line-height:0"><svg width="20" height="28" viewBox="0 0 20 28" ><path d="M3.6 14 V8.6 a6.4 6.4 0 0 1 12.8 0 V14" fill="none" stroke="#b3b3b3" stroke-width="2.2"/><rect x="0.6" y="13" width="18.8" height="14.4" fill="#b3b3b3"/></svg></span></div>
<div class="row lrow" style="left:2612px;top:798.0px;"><i class="sw" style="background:#ff1418"></i><span style="position:absolute;left:55px;top:0">center</span><span style="position:absolute;left:431px;top:7px;line-height:0"><svg width="32" height="26" viewBox="0 0 32 26" ><path d="M0.50 13.00C0.17 10.53 0.00 10.33 1.50 7.20C3.00 4.07 1.50 5.47 5.00 3.60C8.50 1.73 7.33 2.20 12.00 1.60C16.67 1.00 15.00 0.87 19.00 1.80C23.00 2.73 20.80 2.53 24.00 4.40C27.20 6.27 27.73 6.00 28.60 7.40C29.47 8.80 25.97 6.87 26.60 8.60C27.23 10.33 29.70 10.27 30.50 12.60C31.30 14.93 30.83 13.73 29.00 15.60C27.17 17.47 27.33 16.20 25.00 18.20C22.67 20.20 24.33 20.00 22.00 21.60C19.67 23.20 20.67 22.37 18.00 23.00C15.33 23.63 17.00 23.97 14.00 23.50C11.00 23.03 12.00 23.43 9.00 21.60C6.00 19.77 7.17 20.33 5.00 18.00C2.83 15.67 4.00 16.27 2.50 14.60C1.00 12.93 0.83 15.47 0.50 13.00Z" fill="#000"/><path d="M5.50 12.50C5.47 10.10 5.83 10.43 7.40 8.80C8.97 7.17 9.13 6.53 10.20 7.60C11.27 8.67 9.67 9.33 10.60 12.00C11.53 14.67 11.20 14.10 13.00 15.60C14.80 17.10 14.00 16.87 16.00 16.50C18.00 16.13 17.50 16.80 19.00 14.50C20.50 12.20 19.43 11.77 20.50 9.60C21.57 7.43 21.03 8.00 22.20 8.00C23.37 8.00 23.23 8.20 24.00 9.60C24.77 11.00 25.00 10.33 24.50 12.20C24.00 14.07 24.33 13.27 22.50 15.20C20.67 17.13 21.50 16.57 19.00 18.00C16.50 19.43 17.67 19.33 15.00 19.50C12.33 19.67 13.50 19.67 11.00 18.50C8.50 17.33 9.33 18.00 7.50 16.00C5.67 14.00 5.53 14.90 5.50 12.50Z" fill="#fff"/><ellipse cx="13.8" cy="11.2" rx="1.25" ry="2.7" transform="rotate(-8 13.8 11.2)" fill="#fff"/><path d="M6 21.5 l1.2 1.6 M8.5 22.6 l.8 1.5 M11 23.4 l.5 1.4 M13.5 23.8 l.2 1.3 M16.5 23.6 l-.3 1.2" stroke="#000" stroke-width=".8" opacity=".7"/></svg></span><span style="position:absolute;left:480px;top:6px;line-height:0"><svg width="20" height="28" viewBox="0 0 20 28" ><path d="M3.6 14 V8.6 a6.4 6.4 0 0 1 12.8 0 V14" fill="none" stroke="#b3b3b3" stroke-width="2.2"/><rect x="0.6" y="13" width="18.8" height="14.4" fill="#b3b3b3"/></svg></span></div>
<div class="row lrow" style="left:2612px;top:838.0px;background:#d4d4d4;"><i class="sw" style="background:#323f4e"></i><span style="position:absolute;left:55px;top:0">defpoints</span><span style="position:absolute;left:431px;top:7px;line-height:0"><svg width="32" height="26" viewBox="0 0 32 26" ><path d="M0.50 13.00C0.17 10.53 0.00 10.33 1.50 7.20C3.00 4.07 1.50 5.47 5.00 3.60C8.50 1.73 7.33 2.20 12.00 1.60C16.67 1.00 15.00 0.87 19.00 1.80C23.00 2.73 20.80 2.53 24.00 4.40C27.20 6.27 27.73 6.00 28.60 7.40C29.47 8.80 25.97 6.87 26.60 8.60C27.23 10.33 29.70 10.27 30.50 12.60C31.30 14.93 30.83 13.73 29.00 15.60C27.17 17.47 27.33 16.20 25.00 18.20C22.67 20.20 24.33 20.00 22.00 21.60C19.67 23.20 20.67 22.37 18.00 23.00C15.33 23.63 17.00 23.97 14.00 23.50C11.00 23.03 12.00 23.43 9.00 21.60C6.00 19.77 7.17 20.33 5.00 18.00C2.83 15.67 4.00 16.27 2.50 14.60C1.00 12.93 0.83 15.47 0.50 13.00Z" fill="#2e3d4d"/><path d="M5.50 12.50C5.47 10.10 5.83 10.43 7.40 8.80C8.97 7.17 9.13 6.53 10.20 7.60C11.27 8.67 9.67 9.33 10.60 12.00C11.53 14.67 11.20 14.10 13.00 15.60C14.80 17.10 14.00 16.87 16.00 16.50C18.00 16.13 17.50 16.80 19.00 14.50C20.50 12.20 19.43 11.77 20.50 9.60C21.57 7.43 21.03 8.00 22.20 8.00C23.37 8.00 23.23 8.20 24.00 9.60C24.77 11.00 25.00 10.33 24.50 12.20C24.00 14.07 24.33 13.27 22.50 15.20C20.67 17.13 21.50 16.57 19.00 18.00C16.50 19.43 17.67 19.33 15.00 19.50C12.33 19.67 13.50 19.67 11.00 18.50C8.50 17.33 9.33 18.00 7.50 16.00C5.67 14.00 5.53 14.90 5.50 12.50Z" fill="#fff"/><ellipse cx="13.8" cy="11.2" rx="1.25" ry="2.7" transform="rotate(-8 13.8 11.2)" fill="#fff"/><path d="M6 21.5 l1.2 1.6 M8.5 22.6 l.8 1.5 M11 23.4 l.5 1.4 M13.5 23.8 l.2 1.3 M16.5 23.6 l-.3 1.2" stroke="#2e3d4d" stroke-width=".8" opacity=".7"/></svg></span><span style="position:absolute;left:480px;top:6px;line-height:0"><svg width="20" height="28" viewBox="0 0 20 28" ><path d="M3.6 14 V8.6 a6.4 6.4 0 0 1 12.8 0 V14" fill="none" stroke="#b0bdd0" stroke-width="2.2"/><rect x="0.6" y="13" width="18.8" height="14.4" fill="#b0bdd0"/></svg></span></div>
<div class="row lrow" style="left:2612px;top:878.0px;"><i class="sw" style="background:#4d72c4"></i><span style="position:absolute;left:55px;top:0">dimensions</span><span style="position:absolute;left:431px;top:7px;line-height:0"><svg width="32" height="26" viewBox="0 0 32 26" ><path d="M0.50 13.00C0.17 10.53 0.00 10.33 1.50 7.20C3.00 4.07 1.50 5.47 5.00 3.60C8.50 1.73 7.33 2.20 12.00 1.60C16.67 1.00 15.00 0.87 19.00 1.80C23.00 2.73 20.80 2.53 24.00 4.40C27.20 6.27 27.73 6.00 28.60 7.40C29.47 8.80 25.97 6.87 26.60 8.60C27.23 10.33 29.70 10.27 30.50 12.60C31.30 14.93 30.83 13.73 29.00 15.60C27.17 17.47 27.33 16.20 25.00 18.20C22.67 20.20 24.33 20.00 22.00 21.60C19.67 23.20 20.67 22.37 18.00 23.00C15.33 23.63 17.00 23.97 14.00 23.50C11.00 23.03 12.00 23.43 9.00 21.60C6.00 19.77 7.17 20.33 5.00 18.00C2.83 15.67 4.00 16.27 2.50 14.60C1.00 12.93 0.83 15.47 0.50 13.00Z" fill="#000"/><path d="M5.50 12.50C5.47 10.10 5.83 10.43 7.40 8.80C8.97 7.17 9.13 6.53 10.20 7.60C11.27 8.67 9.67 9.33 10.60 12.00C11.53 14.67 11.20 14.10 13.00 15.60C14.80 17.10 14.00 16.87 16.00 16.50C18.00 16.13 17.50 16.80 19.00 14.50C20.50 12.20 19.43 11.77 20.50 9.60C21.57 7.43 21.03 8.00 22.20 8.00C23.37 8.00 23.23 8.20 24.00 9.60C24.77 11.00 25.00 10.33 24.50 12.20C24.00 14.07 24.33 13.27 22.50 15.20C20.67 17.13 21.50 16.57 19.00 18.00C16.50 19.43 17.67 19.33 15.00 19.50C12.33 19.67 13.50 19.67 11.00 18.50C8.50 17.33 9.33 18.00 7.50 16.00C5.67 14.00 5.53 14.90 5.50 12.50Z" fill="#fff"/><ellipse cx="13.8" cy="11.2" rx="1.25" ry="2.7" transform="rotate(-8 13.8 11.2)" fill="#fff"/><path d="M6 21.5 l1.2 1.6 M8.5 22.6 l.8 1.5 M11 23.4 l.5 1.4 M13.5 23.8 l.2 1.3 M16.5 23.6 l-.3 1.2" stroke="#000" stroke-width=".8" opacity=".7"/></svg></span><span style="position:absolute;left:480px;top:6px;line-height:0"><svg width="20" height="28" viewBox="0 0 20 28" ><path d="M3.6 14 V8.6 a6.4 6.4 0 0 1 12.8 0 V14" fill="none" stroke="#b3b3b3" stroke-width="2.2"/><rect x="0.6" y="13" width="18.8" height="14.4" fill="#b3b3b3"/></svg></span></div>
<div class="row lrow" style="left:2612px;top:918.0px;"><i class="sw" style="background:#000"></i><span style="position:absolute;left:55px;top:0">hatch</span><span style="position:absolute;left:431px;top:7px;line-height:0"><svg width="32" height="26" viewBox="0 0 32 26" ><path d="M0.50 13.00C0.17 10.53 0.00 10.33 1.50 7.20C3.00 4.07 1.50 5.47 5.00 3.60C8.50 1.73 7.33 2.20 12.00 1.60C16.67 1.00 15.00 0.87 19.00 1.80C23.00 2.73 20.80 2.53 24.00 4.40C27.20 6.27 27.73 6.00 28.60 7.40C29.47 8.80 25.97 6.87 26.60 8.60C27.23 10.33 29.70 10.27 30.50 12.60C31.30 14.93 30.83 13.73 29.00 15.60C27.17 17.47 27.33 16.20 25.00 18.20C22.67 20.20 24.33 20.00 22.00 21.60C19.67 23.20 20.67 22.37 18.00 23.00C15.33 23.63 17.00 23.97 14.00 23.50C11.00 23.03 12.00 23.43 9.00 21.60C6.00 19.77 7.17 20.33 5.00 18.00C2.83 15.67 4.00 16.27 2.50 14.60C1.00 12.93 0.83 15.47 0.50 13.00Z" fill="#000"/><path d="M5.50 12.50C5.47 10.10 5.83 10.43 7.40 8.80C8.97 7.17 9.13 6.53 10.20 7.60C11.27 8.67 9.67 9.33 10.60 12.00C11.53 14.67 11.20 14.10 13.00 15.60C14.80 17.10 14.00 16.87 16.00 16.50C18.00 16.13 17.50 16.80 19.00 14.50C20.50 12.20 19.43 11.77 20.50 9.60C21.57 7.43 21.03 8.00 22.20 8.00C23.37 8.00 23.23 8.20 24.00 9.60C24.77 11.00 25.00 10.33 24.50 12.20C24.00 14.07 24.33 13.27 22.50 15.20C20.67 17.13 21.50 16.57 19.00 18.00C16.50 19.43 17.67 19.33 15.00 19.50C12.33 19.67 13.50 19.67 11.00 18.50C8.50 17.33 9.33 18.00 7.50 16.00C5.67 14.00 5.53 14.90 5.50 12.50Z" fill="#fff"/><ellipse cx="13.8" cy="11.2" rx="1.25" ry="2.7" transform="rotate(-8 13.8 11.2)" fill="#fff"/><path d="M6 21.5 l1.2 1.6 M8.5 22.6 l.8 1.5 M11 23.4 l.5 1.4 M13.5 23.8 l.2 1.3 M16.5 23.6 l-.3 1.2" stroke="#000" stroke-width=".8" opacity=".7"/></svg></span><span style="position:absolute;left:480px;top:6px;line-height:0"><svg width="20" height="28" viewBox="0 0 20 28" ><path d="M3.6 14 V8.6 a6.4 6.4 0 0 1 12.8 0 V14" fill="none" stroke="#b3b3b3" stroke-width="2.2"/><rect x="0.6" y="13" width="18.8" height="14.4" fill="#b3b3b3"/></svg></span></div>
<div class="row lrow" style="left:2612px;top:958.0px;"><i class="sw" style="background:#000"></i><span style="position:absolute;left:55px;top:0">hidden</span><span style="position:absolute;left:431px;top:7px;line-height:0"><svg width="32" height="26" viewBox="0 0 32 26" ><path d="M0.50 13.00C0.17 10.53 0.00 10.33 1.50 7.20C3.00 4.07 1.50 5.47 5.00 3.60C8.50 1.73 7.33 2.20 12.00 1.60C16.67 1.00 15.00 0.87 19.00 1.80C23.00 2.73 20.80 2.53 24.00 4.40C27.20 6.27 27.73 6.00 28.60 7.40C29.47 8.80 25.97 6.87 26.60 8.60C27.23 10.33 29.70 10.27 30.50 12.60C31.30 14.93 30.83 13.73 29.00 15.60C27.17 17.47 27.33 16.20 25.00 18.20C22.67 20.20 24.33 20.00 22.00 21.60C19.67 23.20 20.67 22.37 18.00 23.00C15.33 23.63 17.00 23.97 14.00 23.50C11.00 23.03 12.00 23.43 9.00 21.60C6.00 19.77 7.17 20.33 5.00 18.00C2.83 15.67 4.00 16.27 2.50 14.60C1.00 12.93 0.83 15.47 0.50 13.00Z" fill="#000"/><path d="M5.50 12.50C5.47 10.10 5.83 10.43 7.40 8.80C8.97 7.17 9.13 6.53 10.20 7.60C11.27 8.67 9.67 9.33 10.60 12.00C11.53 14.67 11.20 14.10 13.00 15.60C14.80 17.10 14.00 16.87 16.00 16.50C18.00 16.13 17.50 16.80 19.00 14.50C20.50 12.20 19.43 11.77 20.50 9.60C21.57 7.43 21.03 8.00 22.20 8.00C23.37 8.00 23.23 8.20 24.00 9.60C24.77 11.00 25.00 10.33 24.50 12.20C24.00 14.07 24.33 13.27 22.50 15.20C20.67 17.13 21.50 16.57 19.00 18.00C16.50 19.43 17.67 19.33 15.00 19.50C12.33 19.67 13.50 19.67 11.00 18.50C8.50 17.33 9.33 18.00 7.50 16.00C5.67 14.00 5.53 14.90 5.50 12.50Z" fill="#fff"/><ellipse cx="13.8" cy="11.2" rx="1.25" ry="2.7" transform="rotate(-8 13.8 11.2)" fill="#fff"/><path d="M6 21.5 l1.2 1.6 M8.5 22.6 l.8 1.5 M11 23.4 l.5 1.4 M13.5 23.8 l.2 1.3 M16.5 23.6 l-.3 1.2" stroke="#000" stroke-width=".8" opacity=".7"/></svg></span><span style="position:absolute;left:480px;top:6px;line-height:0"><svg width="20" height="28" viewBox="0 0 20 28" ><path d="M3.6 14 V8.6 a6.4 6.4 0 0 1 12.8 0 V14" fill="none" stroke="#b3b3b3" stroke-width="2.2"/><rect x="0.6" y="13" width="18.8" height="14.4" fill="#b3b3b3"/></svg></span></div>
<div class="row lrow" style="left:2612px;top:998.0px;"><i class="sw" style="background:#000"></i><span style="position:absolute;left:55px;top:0">revision</span><span style="position:absolute;left:431px;top:7px;line-height:0"><svg width="32" height="26" viewBox="0 0 32 26" ><path d="M0.50 13.00C0.17 10.53 0.00 10.33 1.50 7.20C3.00 4.07 1.50 5.47 5.00 3.60C8.50 1.73 7.33 2.20 12.00 1.60C16.67 1.00 15.00 0.87 19.00 1.80C23.00 2.73 20.80 2.53 24.00 4.40C27.20 6.27 27.73 6.00 28.60 7.40C29.47 8.80 25.97 6.87 26.60 8.60C27.23 10.33 29.70 10.27 30.50 12.60C31.30 14.93 30.83 13.73 29.00 15.60C27.17 17.47 27.33 16.20 25.00 18.20C22.67 20.20 24.33 20.00 22.00 21.60C19.67 23.20 20.67 22.37 18.00 23.00C15.33 23.63 17.00 23.97 14.00 23.50C11.00 23.03 12.00 23.43 9.00 21.60C6.00 19.77 7.17 20.33 5.00 18.00C2.83 15.67 4.00 16.27 2.50 14.60C1.00 12.93 0.83 15.47 0.50 13.00Z" fill="#000"/><path d="M5.50 12.50C5.47 10.10 5.83 10.43 7.40 8.80C8.97 7.17 9.13 6.53 10.20 7.60C11.27 8.67 9.67 9.33 10.60 12.00C11.53 14.67 11.20 14.10 13.00 15.60C14.80 17.10 14.00 16.87 16.00 16.50C18.00 16.13 17.50 16.80 19.00 14.50C20.50 12.20 19.43 11.77 20.50 9.60C21.57 7.43 21.03 8.00 22.20 8.00C23.37 8.00 23.23 8.20 24.00 9.60C24.77 11.00 25.00 10.33 24.50 12.20C24.00 14.07 24.33 13.27 22.50 15.20C20.67 17.13 21.50 16.57 19.00 18.00C16.50 19.43 17.67 19.33 15.00 19.50C12.33 19.67 13.50 19.67 11.00 18.50C8.50 17.33 9.33 18.00 7.50 16.00C5.67 14.00 5.53 14.90 5.50 12.50Z" fill="#fff"/><ellipse cx="13.8" cy="11.2" rx="1.25" ry="2.7" transform="rotate(-8 13.8 11.2)" fill="#fff"/><path d="M6 21.5 l1.2 1.6 M8.5 22.6 l.8 1.5 M11 23.4 l.5 1.4 M13.5 23.8 l.2 1.3 M16.5 23.6 l-.3 1.2" stroke="#000" stroke-width=".8" opacity=".7"/></svg></span><span style="position:absolute;left:480px;top:6px;line-height:0"><svg width="20" height="28" viewBox="0 0 20 28" ><path d="M3.6 14 V8.6 a6.4 6.4 0 0 1 12.8 0 V14" fill="none" stroke="#b3b3b3" stroke-width="2.2"/><rect x="0.6" y="13" width="18.8" height="14.4" fill="#b3b3b3"/></svg></span></div>
<div class="row lrow" style="left:2612px;top:1038.0px;"><i class="sw" style="background:#000"></i><span style="position:absolute;left:55px;top:0">thin</span><span style="position:absolute;left:431px;top:7px;line-height:0"><svg width="32" height="26" viewBox="0 0 32 26" ><path d="M0.50 13.00C0.17 10.53 0.00 10.33 1.50 7.20C3.00 4.07 1.50 5.47 5.00 3.60C8.50 1.73 7.33 2.20 12.00 1.60C16.67 1.00 15.00 0.87 19.00 1.80C23.00 2.73 20.80 2.53 24.00 4.40C27.20 6.27 27.73 6.00 28.60 7.40C29.47 8.80 25.97 6.87 26.60 8.60C27.23 10.33 29.70 10.27 30.50 12.60C31.30 14.93 30.83 13.73 29.00 15.60C27.17 17.47 27.33 16.20 25.00 18.20C22.67 20.20 24.33 20.00 22.00 21.60C19.67 23.20 20.67 22.37 18.00 23.00C15.33 23.63 17.00 23.97 14.00 23.50C11.00 23.03 12.00 23.43 9.00 21.60C6.00 19.77 7.17 20.33 5.00 18.00C2.83 15.67 4.00 16.27 2.50 14.60C1.00 12.93 0.83 15.47 0.50 13.00Z" fill="#000"/><path d="M5.50 12.50C5.47 10.10 5.83 10.43 7.40 8.80C8.97 7.17 9.13 6.53 10.20 7.60C11.27 8.67 9.67 9.33 10.60 12.00C11.53 14.67 11.20 14.10 13.00 15.60C14.80 17.10 14.00 16.87 16.00 16.50C18.00 16.13 17.50 16.80 19.00 14.50C20.50 12.20 19.43 11.77 20.50 9.60C21.57 7.43 21.03 8.00 22.20 8.00C23.37 8.00 23.23 8.20 24.00 9.60C24.77 11.00 25.00 10.33 24.50 12.20C24.00 14.07 24.33 13.27 22.50 15.20C20.67 17.13 21.50 16.57 19.00 18.00C16.50 19.43 17.67 19.33 15.00 19.50C12.33 19.67 13.50 19.67 11.00 18.50C8.50 17.33 9.33 18.00 7.50 16.00C5.67 14.00 5.53 14.90 5.50 12.50Z" fill="#fff"/><ellipse cx="13.8" cy="11.2" rx="1.25" ry="2.7" transform="rotate(-8 13.8 11.2)" fill="#fff"/><path d="M6 21.5 l1.2 1.6 M8.5 22.6 l.8 1.5 M11 23.4 l.5 1.4 M13.5 23.8 l.2 1.3 M16.5 23.6 l-.3 1.2" stroke="#000" stroke-width=".8" opacity=".7"/></svg></span><span style="position:absolute;left:480px;top:6px;line-height:0"><svg width="20" height="28" viewBox="0 0 20 28" ><path d="M3.6 14 V8.6 a6.4 6.4 0 0 1 12.8 0 V14" fill="none" stroke="#b3b3b3" stroke-width="2.2"/><rect x="0.6" y="13" width="18.8" height="14.4" fill="#b3b3b3"/></svg></span></div>
<div class="row lrow" style="left:2612px;top:1078.0px;"><i class="sw" style="background:#000"></i><span style="position:absolute;left:55px;top:0">thin2</span><span style="position:absolute;left:431px;top:7px;line-height:0"><svg width="32" height="26" viewBox="0 0 32 26" ><path d="M0.50 13.00C0.17 10.53 0.00 10.33 1.50 7.20C3.00 4.07 1.50 5.47 5.00 3.60C8.50 1.73 7.33 2.20 12.00 1.60C16.67 1.00 15.00 0.87 19.00 1.80C23.00 2.73 20.80 2.53 24.00 4.40C27.20 6.27 27.73 6.00 28.60 7.40C29.47 8.80 25.97 6.87 26.60 8.60C27.23 10.33 29.70 10.27 30.50 12.60C31.30 14.93 30.83 13.73 29.00 15.60C27.17 17.47 27.33 16.20 25.00 18.20C22.67 20.20 24.33 20.00 22.00 21.60C19.67 23.20 20.67 22.37 18.00 23.00C15.33 23.63 17.00 23.97 14.00 23.50C11.00 23.03 12.00 23.43 9.00 21.60C6.00 19.77 7.17 20.33 5.00 18.00C2.83 15.67 4.00 16.27 2.50 14.60C1.00 12.93 0.83 15.47 0.50 13.00Z" fill="#000"/><path d="M5.50 12.50C5.47 10.10 5.83 10.43 7.40 8.80C8.97 7.17 9.13 6.53 10.20 7.60C11.27 8.67 9.67 9.33 10.60 12.00C11.53 14.67 11.20 14.10 13.00 15.60C14.80 17.10 14.00 16.87 16.00 16.50C18.00 16.13 17.50 16.80 19.00 14.50C20.50 12.20 19.43 11.77 20.50 9.60C21.57 7.43 21.03 8.00 22.20 8.00C23.37 8.00 23.23 8.20 24.00 9.60C24.77 11.00 25.00 10.33 24.50 12.20C24.00 14.07 24.33 13.27 22.50 15.20C20.67 17.13 21.50 16.57 19.00 18.00C16.50 19.43 17.67 19.33 15.00 19.50C12.33 19.67 13.50 19.67 11.00 18.50C8.50 17.33 9.33 18.00 7.50 16.00C5.67 14.00 5.53 14.90 5.50 12.50Z" fill="#fff"/><ellipse cx="13.8" cy="11.2" rx="1.25" ry="2.7" transform="rotate(-8 13.8 11.2)" fill="#fff"/><path d="M6 21.5 l1.2 1.6 M8.5 22.6 l.8 1.5 M11 23.4 l.5 1.4 M13.5 23.8 l.2 1.3 M16.5 23.6 l-.3 1.2" stroke="#000" stroke-width=".8" opacity=".7"/></svg></span><span style="position:absolute;left:480px;top:6px;line-height:0"><svg width="20" height="28" viewBox="0 0 20 28" ><path d="M3.6 14 V8.6 a6.4 6.4 0 0 1 12.8 0 V14" fill="none" stroke="#b3b3b3" stroke-width="2.2"/><rect x="0.6" y="13" width="18.8" height="14.4" fill="#b3b3b3"/></svg></span></div>
<div class="row lrow" style="left:2612px;top:1118.0px;"><i class="sw" style="background:#000"></i><span style="position:absolute;left:55px;top:0">title</span><span style="position:absolute;left:431px;top:7px;line-height:0"><svg width="32" height="26" viewBox="0 0 32 26" ><path d="M0.50 13.00C0.17 10.53 0.00 10.33 1.50 7.20C3.00 4.07 1.50 5.47 5.00 3.60C8.50 1.73 7.33 2.20 12.00 1.60C16.67 1.00 15.00 0.87 19.00 1.80C23.00 2.73 20.80 2.53 24.00 4.40C27.20 6.27 27.73 6.00 28.60 7.40C29.47 8.80 25.97 6.87 26.60 8.60C27.23 10.33 29.70 10.27 30.50 12.60C31.30 14.93 30.83 13.73 29.00 15.60C27.17 17.47 27.33 16.20 25.00 18.20C22.67 20.20 24.33 20.00 22.00 21.60C19.67 23.20 20.67 22.37 18.00 23.00C15.33 23.63 17.00 23.97 14.00 23.50C11.00 23.03 12.00 23.43 9.00 21.60C6.00 19.77 7.17 20.33 5.00 18.00C2.83 15.67 4.00 16.27 2.50 14.60C1.00 12.93 0.83 15.47 0.50 13.00Z" fill="#000"/><path d="M5.50 12.50C5.47 10.10 5.83 10.43 7.40 8.80C8.97 7.17 9.13 6.53 10.20 7.60C11.27 8.67 9.67 9.33 10.60 12.00C11.53 14.67 11.20 14.10 13.00 15.60C14.80 17.10 14.00 16.87 16.00 16.50C18.00 16.13 17.50 16.80 19.00 14.50C20.50 12.20 19.43 11.77 20.50 9.60C21.57 7.43 21.03 8.00 22.20 8.00C23.37 8.00 23.23 8.20 24.00 9.60C24.77 11.00 25.00 10.33 24.50 12.20C24.00 14.07 24.33 13.27 22.50 15.20C20.67 17.13 21.50 16.57 19.00 18.00C16.50 19.43 17.67 19.33 15.00 19.50C12.33 19.67 13.50 19.67 11.00 18.50C8.50 17.33 9.33 18.00 7.50 16.00C5.67 14.00 5.53 14.90 5.50 12.50Z" fill="#fff"/><ellipse cx="13.8" cy="11.2" rx="1.25" ry="2.7" transform="rotate(-8 13.8 11.2)" fill="#fff"/><path d="M6 21.5 l1.2 1.6 M8.5 22.6 l.8 1.5 M11 23.4 l.5 1.4 M13.5 23.8 l.2 1.3 M16.5 23.6 l-.3 1.2" stroke="#000" stroke-width=".8" opacity=".7"/></svg></span><span style="position:absolute;left:480px;top:6px;line-height:0"><svg width="20" height="28" viewBox="0 0 20 28" ><path d="M3.6 14 V8.6 a6.4 6.4 0 0 1 12.8 0 V14" fill="none" stroke="#b3b3b3" stroke-width="2.2"/><rect x="0.6" y="13" width="18.8" height="14.4" fill="#b3b3b3"/></svg></span></div>
<div class="row lrow" style="left:2612px;top:1158.0px;"><i class="sw" style="background:#ff8020"></i><span style="position:absolute;left:55px;top:0">viewports</span><span style="position:absolute;left:431px;top:7px;line-height:0"><svg width="32" height="26" viewBox="0 0 32 26" ><path d="M0.50 13.00C0.17 10.53 0.00 10.33 1.50 7.20C3.00 4.07 1.50 5.47 5.00 3.60C8.50 1.73 7.33 2.20 12.00 1.60C16.67 1.00 15.00 0.87 19.00 1.80C23.00 2.73 20.80 2.53 24.00 4.40C27.20 6.27 27.73 6.00 28.60 7.40C29.47 8.80 25.97 6.87 26.60 8.60C27.23 10.33 29.70 10.27 30.50 12.60C31.30 14.93 30.83 13.73 29.00 15.60C27.17 17.47 27.33 16.20 25.00 18.20C22.67 20.20 24.33 20.00 22.00 21.60C19.67 23.20 20.67 22.37 18.00 23.00C15.33 23.63 17.00 23.97 14.00 23.50C11.00 23.03 12.00 23.43 9.00 21.60C6.00 19.77 7.17 20.33 5.00 18.00C2.83 15.67 4.00 16.27 2.50 14.60C1.00 12.93 0.83 15.47 0.50 13.00Z" fill="#000"/><path d="M5.50 12.50C5.47 10.10 5.83 10.43 7.40 8.80C8.97 7.17 9.13 6.53 10.20 7.60C11.27 8.67 9.67 9.33 10.60 12.00C11.53 14.67 11.20 14.10 13.00 15.60C14.80 17.10 14.00 16.87 16.00 16.50C18.00 16.13 17.50 16.80 19.00 14.50C20.50 12.20 19.43 11.77 20.50 9.60C21.57 7.43 21.03 8.00 22.20 8.00C23.37 8.00 23.23 8.20 24.00 9.60C24.77 11.00 25.00 10.33 24.50 12.20C24.00 14.07 24.33 13.27 22.50 15.20C20.67 17.13 21.50 16.57 19.00 18.00C16.50 19.43 17.67 19.33 15.00 19.50C12.33 19.67 13.50 19.67 11.00 18.50C8.50 17.33 9.33 18.00 7.50 16.00C5.67 14.00 5.53 14.90 5.50 12.50Z" fill="#fff"/><ellipse cx="13.8" cy="11.2" rx="1.25" ry="2.7" transform="rotate(-8 13.8 11.2)" fill="#fff"/><path d="M6 21.5 l1.2 1.6 M8.5 22.6 l.8 1.5 M11 23.4 l.5 1.4 M13.5 23.8 l.2 1.3 M16.5 23.6 l-.3 1.2" stroke="#000" stroke-width=".8" opacity=".7"/></svg></span><span style="position:absolute;left:480px;top:6px;line-height:0"><svg width="20" height="28" viewBox="0 0 20 28" ><path d="M3.6 14 V8.6 a6.4 6.4 0 0 1 12.8 0 V14" fill="none" stroke="#b3b3b3" stroke-width="2.2"/><rect x="0.6" y="13" width="18.8" height="14.4" fill="#b3b3b3"/></svg></span></div>
<div id="rtool" class="abs"></div>
<i class="abs" style="left:3136.3px;top:216.3px;width:3.4px;height:3.4px;border-radius:50%;background:#9c9c9c"></i><i class="abs" style="left:3148.3px;top:216.3px;width:3.4px;height:3.4px;border-radius:50%;background:#9c9c9c"></i><i class="abs" style="left:3160.3px;top:216.3px;width:3.4px;height:3.4px;border-radius:50%;background:#9c9c9c"></i><i class="abs" style="left:3172.3px;top:216.3px;width:3.4px;height:3.4px;border-radius:50%;background:#9c9c9c"></i>
<div class="abs" style="left:3124px;top:224px;width:74px;height:73px;background:linear-gradient(#a9a9a9,#c9c9c9 40%,#d6d6d6);border:2px solid #8f8f8f"></div>
<div class="abs" style="left:3132px;top:232px;line-height:0"><svg width="55" height="55" viewBox="0 0 55 55" ><rect x="1" y="1" width="53" height="53" fill="#fff" stroke="#222" stroke-width="1.6"/><rect x="1" y="1" width="53" height="8.5" fill="#000"/><rect x="2" y="2" width="7" height="7" fill="#fff" stroke="#222" stroke-width="1"/><path d="M14 27 L33 19 V40 L14 48 Z" fill="#d8d8d8" stroke="#333" stroke-width="1.4"/><path d="M18 27 L37 19 V40 L18 48 Z" fill="#eee" stroke="#333" stroke-width="1.4"/><path d="M23 26 L42 18 V39 L23 47 Z" fill="#fff" stroke="#333" stroke-width="1.4"/><path d="M28 41 L38 24 L38 37 Z" fill="none" stroke="#e33" stroke-width="1.4"/></svg></div>
<div class="abs" style="left:3124px;top:307px;width:74px;height:73px;background:linear-gradient(#a9a9a9,#c9c9c9 40%,#d6d6d6);border:2px solid #8f8f8f"></div>
<div class="abs" style="left:3132px;top:315px;line-height:0"><svg width="55" height="55" viewBox="0 0 55 55" ><rect x="1" y="1" width="53" height="53" fill="#fff" stroke="#222" stroke-width="1.6"/><rect x="1" y="1" width="53" height="8.5" fill="#000"/><rect x="2" y="2" width="7" height="7" fill="#fff" stroke="#222" stroke-width="1"/><rect x="15" y="20" width="20" height="14" fill="#faf0c8" stroke="#444" stroke-width="1.4"/><circle cx="36" cy="35" r="8.5" fill="#faf0c8" fill-opacity=".9" stroke="#444" stroke-width="1.4"/></svg></div>
<div class="abs" style="left:3132px;top:396px;line-height:0"><svg width="55" height="55" viewBox="0 0 55 55" ><rect x="1" y="1" width="53" height="53" fill="#fff" stroke="#222" stroke-width="1.6"/><rect x="1" y="1" width="53" height="8.5" fill="#000"/><rect x="2" y="2" width="7" height="7" fill="#fff" stroke="#222" stroke-width="1"/><rect x="11" y="21" width="33" height="21" rx="3" fill="#f4f4f6" stroke="#a8c0e8" stroke-width="1.4"/></svg></div>
<div class="abs" style="left:3132px;top:498px;line-height:0"><svg width="55" height="55" viewBox="0 0 55 55" ><rect x="1" y="1" width="53" height="53" fill="#fff" stroke="#222" stroke-width="1.6"/><rect x="1" y="1" width="53" height="8.5" fill="#000"/><rect x="2" y="2" width="7" height="7" fill="#fff" stroke="#222" stroke-width="1"/><rect x="7" y="17.0" width="9" height="6.5" fill="#000"/><rect x="21" y="17.0" width="27" height="6.5" rx="1.5" fill="#fff" stroke="#333" stroke-width="1.2"/><rect x="7" y="28.5" width="9" height="6.5" fill="#000"/><rect x="21" y="28.5" width="27" height="6.5" rx="1.5" fill="#fff" stroke="#333" stroke-width="1.2"/><rect x="7" y="40.0" width="9" height="6.5" fill="#000"/><rect x="21" y="40.0" width="27" height="6.5" rx="1.5" fill="#fff" stroke="#333" stroke-width="1.2"/></svg></div>
<div class="abs" style="left:3132px;top:580px;line-height:0"><svg width="55" height="55" viewBox="0 0 55 55" ><rect x="1" y="1" width="53" height="53" fill="#fff" stroke="#222" stroke-width="1.6"/><rect x="1" y="1" width="53" height="8.5" fill="#000"/><rect x="2" y="2" width="7" height="7" fill="#fff" stroke="#222" stroke-width="1"/><ellipse cx="28" cy="20" rx="15" ry="3.4" fill="#9a9a9a" stroke="#222" stroke-width="1.3"/><path d="M13 21 L25 35 V44 L31 48 V35 L43 21" fill="#d6d6d6" stroke="#222" stroke-width="1.4" stroke-linejoin="round"/></svg></div>
<div class="abs" style="left:3132px;top:662px;line-height:0"><svg width="55" height="55" viewBox="0 0 55 55" ><rect x="1" y="1" width="53" height="53" fill="#fff" stroke="#222" stroke-width="1.6"/><rect x="1" y="1" width="53" height="8.5" fill="#000"/><rect x="2" y="2" width="7" height="7" fill="#fff" stroke="#222" stroke-width="1"/><path d="M12 17 L25 24 V39 L12 46 Z" fill="#fff" stroke="#222" stroke-width="1.4"/><rect x="25" y="24" width="18" height="15" rx="2" fill="#bbb" stroke="#333" stroke-width="1.2"/><path d="M28 24 V39 M31 24 V39 M34 24 V39 M37 24 V39 M40 24 V39" stroke="#555" stroke-width="1"/><path d="M8 31.5 H50" stroke="#f33" stroke-width="1.2" stroke-dasharray="7 2 2 2"/></svg></div>
<div class="abs" style="left:3124px;top:756px;width:74px;height:73px;background:linear-gradient(#a9a9a9,#c9c9c9 40%,#d6d6d6);border:2px solid #8f8f8f"></div>
<div class="abs" style="left:3132px;top:764px;line-height:0"><svg width="55" height="55" viewBox="0 0 55 55" ><rect x="1" y="1" width="53" height="53" fill="#fff" stroke="#222" stroke-width="1.6"/><rect x="1" y="1" width="53" height="8.5" fill="#000"/><rect x="2" y="2" width="7" height="7" fill="#fff" stroke="#222" stroke-width="1"/><g font-family="Liberation Sans, DejaVu Sans, sans-serif" fill="#222"><text x="5" y="20.0" font-size="4.6">Command: new</text><text x="5" y="27.2" font-size="4.6">Command: line</text><text x="5" y="34.4" font-size="4.6">Coordinate: 10,40</text><text x="5" y="41.6" font-size="4.6">Coordinate: 50,100</text><text x="5" y="52" font-size="6.8">c:</text><text x="19" y="52" font-size="6.8">command</text></g><path d="M1 45 H54" stroke="#222" stroke-width="1"/></svg></div>
<div class="abs" style="left:3132px;top:846px;line-height:0"><svg width="55" height="55" viewBox="0 0 55 55" ><rect x="1" y="1" width="53" height="53" fill="#fff" stroke="#222" stroke-width="1.6"/><rect x="1" y="1" width="53" height="8.5" fill="#000"/><rect x="2" y="2" width="7" height="7" fill="#fff" stroke="#222" stroke-width="1"/><rect x="16" y="18" width="25" height="31" rx="2" fill="#c98a2b" stroke="#8c5a12" stroke-width="1"/><rect x="19" y="21" width="19" height="25" fill="#f6f6f6" stroke="#aaa" stroke-width=".8"/><path d="M22 27 H35 M22 31 H35 M22 35 H33 M22 39 H35" stroke="#c8c8c8" stroke-width="1.4"/><rect x="23" y="15" width="11" height="6" rx="1.5" fill="#9c9c90" stroke="#6e6e66" stroke-width=".8"/><path d="M38 40 L32 46 H38 Z" fill="#8d8d8d"/></svg></div>
<i class="abs" style="left:3126px;top:474px;width:74px;height:2px;background:repeating-linear-gradient(90deg,#8a8a8a 0,#8a8a8a 2px,transparent 2px,transparent 6px)"></i>
<i class="abs" style="left:3126px;top:739px;width:74px;height:2px;background:repeating-linear-gradient(90deg,#8a8a8a 0,#8a8a8a 2px,transparent 2px,transparent 6px)"></i>
<div class="abs" style="left:2580px;top:279px;width:566px;height:74px;border:11px solid #f92b1c"></div>
<div id="status" class="abs"></div>
<span class="abs st" style="left:4px;top:2010px">114.024,-9.8609</span><span class="abs st" style="left:4px;top:2051px">@114.024,-9.8609</span>
<i class="abs" style="left:538px;top:2001px;width:3px;height:78px;background:#fcfcfc"></i>
<span class="abs st" style="left:544px;top:2010px">114.4496&lt;355°</span><span class="abs st" style="left:544px;top:2051px">@114.4496&lt;355°</span>
<i class="abs" style="left:1079px;top:2034px;width:12px;height:12px;border-radius:50%;background:#a9a9a9;border:1px solid #9a9a9a"></i>
<i class="abs" style="left:2008px;top:2034px;width:12px;height:12px;border-radius:50%;background:#a9a9a9;border:1px solid #9a9a9a"></i>
<i class="abs" style="left:2711px;top:2034px;width:12px;height:12px;border-radius:50%;background:#a9a9a9;border:1px solid #9a9a9a"></i>
<span class="abs st" style="left:1308px;top:2029px">Select entity or region</span>
<div class="abs" style="left:1520px;top:2004px;line-height:0"><svg width="58" height="66" viewBox="0 0 58 66" ><defs><radialGradient id="g22" cx=".45" cy=".7" r=".75"><stop offset="0" stop-color="#ffffff"/><stop offset=".6" stop-color="#eeeeee"/><stop offset="1" stop-color="#c9c9c9"/></radialGradient></defs>
<path d="M14 0 L19 12" stroke="#555" stroke-width="2.6"/>
<path d="M5 22 Q3 8 20 6 Q33 5 40 16 Q55 38 55 50 Q54 62 36 64 Q20 65 14 58 Q6 44 5 22 Z" fill="url(#g22)" stroke="#8a8a8a" stroke-width="1.4"/>
<path d="M7 24 Q20 34 36 22" fill="none" stroke="#d2d2d2" stroke-width="3"/>
<path d="M19 10 L26 26" stroke="#3a58d8" stroke-width="5" stroke-linecap="round"/><path d="M18 8 L20 13" stroke="#8aa" stroke-width="2"/></svg></div>
<span class="abs st" style="left:2026px;top:2029px">No entities selected.</span>
</body></html>
